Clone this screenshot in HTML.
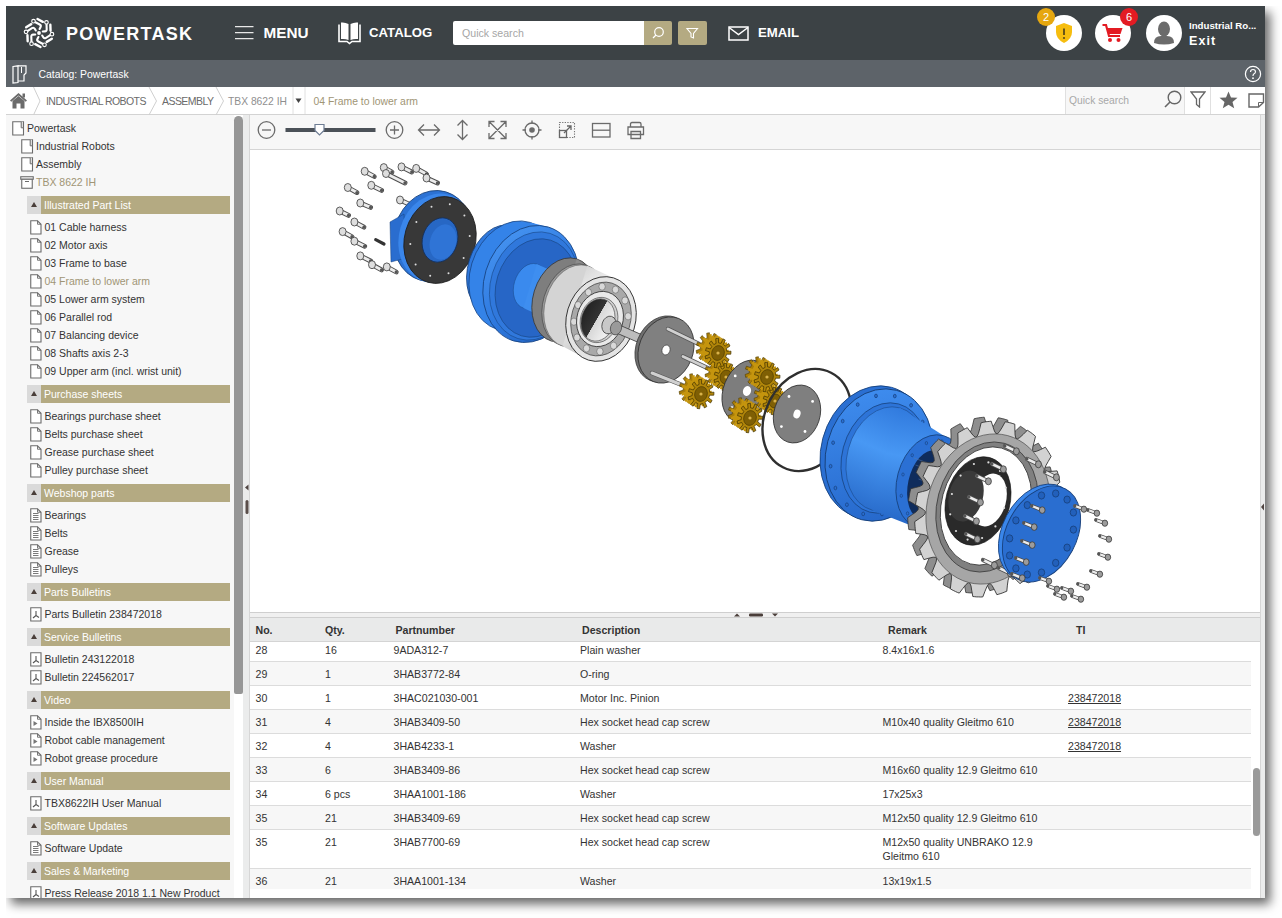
<!DOCTYPE html>
<html><head><meta charset="utf-8"><title>Powertask</title>
<style>
*{box-sizing:border-box}
html,body{margin:0;padding:0;background:#fff;width:1282px;height:918px;overflow:hidden;font-family:"Liberation Sans", sans-serif}
.abs{position:absolute}
#shadow{position:absolute;left:6px;top:6px;width:1259px;height:892px;box-shadow:5px 6px 10px rgba(0,0,0,0.6);background:#fff;clip-path:inset(0px -40px -40px 0px)}
#hdr{position:absolute;left:6px;top:6px;width:1259px;height:54px;background:#3c4245}
#cat{position:absolute;left:6px;top:60px;width:1259px;height:27px;background:#5d6369}
#bc{position:absolute;left:6px;top:87px;width:1259px;height:28px;background:#fff;border-bottom:1px solid #d3d3d3}
#side{position:absolute;left:6px;top:115px;width:228px;height:783px;background:#f7f7f7;overflow:hidden}
.ic{position:absolute}
.ti{position:absolute;font-size:10.5px;line-height:14px;white-space:nowrap}
.sh{position:absolute;left:27px;width:203px;height:18px;background:#b4aa82}
.sh .tri{position:absolute;left:0;top:0;width:14px;height:18px;background:#dadada}
.sh .tri:after{content:"";position:absolute;left:3.5px;top:6px;border-left:3.5px solid transparent;border-right:3.5px solid transparent;border-bottom:5px solid #4a3f3a}
.sh .shl{position:absolute;left:17px;top:2px;font-size:10.5px;line-height:14px;color:#fff;white-space:nowrap}
#thumb{position:absolute;left:234px;top:116px;width:9px;height:578px;background:#969696;border-radius:4.5px 4.5px 2px 2px}
#split{position:absolute;left:243px;top:115px;width:7px;height:783px;background:#ebecec;border-right:1px solid #d6d6d6}
#tb{position:absolute;left:250px;top:115px;width:1010px;height:35px;background:#f7f7f7;border-bottom:1px solid #d5d5d5}
#view{position:absolute;left:250px;top:150px;width:1010px;height:462px;background:#fff}
#rstrip{position:absolute;left:1260px;top:115px;width:5px;height:783px;background:#ebecec;border-left:1px solid #d6d6d6}
#splitter{position:absolute;left:250px;top:612px;width:1010px;height:6px;background:#f0f0f0;border-top:1px solid #cfcfcf;border-bottom:1px solid #cfcfcf}
#th{position:absolute;left:250px;top:618px;width:1010px;height:24px;background:#e9eaea;border-bottom:1px solid #d4d4d4}
.thc{position:absolute;top:5px;font-size:10.6px;font-weight:bold;color:#333;line-height:14px}
#tbody{position:absolute;left:250px;top:642px;width:1010px;height:256px;overflow:hidden;background:#fff}
.tr{position:absolute;left:0;width:1001px;border-bottom:1px solid #dcdcdc}
.td{position:absolute;top:4.5px;font-size:10.6px;line-height:14.6px;color:#333;white-space:nowrap}
.tr{}
#tthumb{position:absolute;left:1253px;top:768px;width:7px;height:68px;background:#9a9a9a;border-radius:3.5px}
.w{color:#fff}
</style></head><body>
<div id="shadow"></div>
<div id="hdr"></div>
<div id="cat"></div>
<div id="bc"></div>
<div id="side"></div>
<div id="split"></div>
<div id="thumb"></div>
<div id="tb"></div>
<div id="view"></div>
<div id="rstrip"></div>
<div id="splitter"></div>
<div id="th"></div>
<div id="tbody"></div>

<!-- HEADER CONTENT -->
<svg class="abs" style="left:22px;top:16px" width="34" height="34" viewBox="0 0 34 34"><g fill="none" stroke="#fff" stroke-width="2.1" stroke-linecap="round"><path d="M12.92 5.97L17.69 8.50Q19.45 9.44 18.51 11.21L17.57 12.98"/><path d="M15.50 3.04L20.80 5.85" stroke-width="2.4"/><circle cx="11.51" cy="5.22" r="1.8" stroke-width="1.15" fill="#3c4245"/><path d="M24.51 7.95L24.70 13.35Q24.77 15.35 22.77 15.42L20.77 15.49"/><path d="M28.34 8.72L28.55 14.71" stroke-width="2.4"/><circle cx="24.46" cy="6.35" r="1.8" stroke-width="1.15" fill="#3c4245"/><path d="M28.59 18.98L24.01 21.84Q22.32 22.90 21.26 21.21L20.20 19.51"/><path d="M29.84 22.68L24.76 25.86" stroke-width="2.4"/><circle cx="29.95" cy="18.13" r="1.8" stroke-width="1.15" fill="#3c4245"/><path d="M21.08 28.03L16.31 25.50Q14.55 24.56 15.49 22.79L16.43 21.02"/><path d="M18.50 30.96L13.20 28.15" stroke-width="2.4"/><circle cx="22.49" cy="28.78" r="1.8" stroke-width="1.15" fill="#3c4245"/><path d="M9.49 26.05L9.30 20.65Q9.23 18.65 11.23 18.58L13.23 18.51"/><path d="M5.66 25.28L5.45 19.29" stroke-width="2.4"/><circle cx="9.54" cy="27.65" r="1.8" stroke-width="1.15" fill="#3c4245"/><path d="M5.41 15.02L9.99 12.16Q11.68 11.10 12.74 12.79L13.80 14.49"/><path d="M4.16 11.32L9.24 8.14" stroke-width="2.4"/><circle cx="4.05" cy="15.87" r="1.8" stroke-width="1.15" fill="#3c4245"/></g><circle cx="17" cy="17" r="1.9" fill="#fff"/></svg>
<div class="abs w" style="left:66px;top:21.5px;font-size:18px;font-weight:bold;letter-spacing:1.3px;line-height:24px">POWERTASK</div>
<svg class="abs" style="left:235px;top:25px" width="19" height="15"><path d="M0 1.6H18.5M0 7.6H18.5M0 13.6H18.5" stroke="#e8e8e8" stroke-width="1.4"/></svg>
<div class="abs w" style="left:263.5px;top:23px;font-size:15.3px;font-weight:bold;line-height:19px">MENU</div>
<svg class="abs" style="left:337px;top:21px" width="25" height="24" viewBox="0 0 25 24"><path d="M2 3.5 V20.5 H10 L12.5 22.5 L15 20.5 H23 V3.5" fill="none" stroke="#fff" stroke-width="1.6"/><path d="M4 1.5 Q8 1 11.5 3 V19 Q8 17.5 4 18Z M21 1.5 Q17 1 13.5 3 V19 Q17 17.5 21 18Z" fill="#fff"/></svg>
<div class="abs w" style="left:369px;top:24px;font-size:13.2px;font-weight:bold;line-height:18px">CATALOG</div>
<div class="abs" style="left:453px;top:21px;width:191px;height:24px;background:#fff;border-radius:2px 0 0 2px"></div>
<div class="abs" style="left:462px;top:25.5px;font-size:10.6px;color:#a6a6a6;line-height:14px">Quick search</div>
<div class="abs" style="left:644px;top:21px;width:28px;height:24px;background:#b4aa82;border-radius:0 2px 2px 0"></div>
<svg class="abs" style="left:651px;top:26px" width="14" height="14"><circle cx="8" cy="6" r="4.3" fill="none" stroke="#fff" stroke-width="1.2"/><path d="M5 9 L2 12" stroke="#fff" stroke-width="1.3"/></svg>
<div class="abs" style="left:678px;top:21px;width:29px;height:24px;background:#b4aa82;border-radius:2px"></div>
<svg class="abs" style="left:686px;top:27px" width="13" height="13"><path d="M1 1.5 H11.5 L7.5 6.5 V11 L5 10 V6.5Z" fill="none" stroke="#fff" stroke-width="1.1"/></svg>
<svg class="abs" style="left:728px;top:26px" width="21" height="15"><rect x="1" y="1" width="19" height="13" fill="none" stroke="#fff" stroke-width="1.5"/><path d="M1 1.5 L10.5 8.5 L20 1.5" fill="none" stroke="#fff" stroke-width="1.5"/></svg>
<div class="abs w" style="left:758px;top:24px;font-size:13.2px;font-weight:bold;line-height:18px">EMAIL</div>

<div class="abs" style="left:1046px;top:15px;width:36px;height:36px;border-radius:50%;background:#fff"></div>
<svg class="abs" style="left:1054px;top:22px" width="20" height="22" viewBox="0 0 20 22"><path d="M10 1 L18 4 V10 Q18 17 10 21 Q2 17 2 10 V4Z" fill="#f6bd0f"/><path d="M10 6.5V13" stroke="#5a4a1a" stroke-width="1.8"/><circle cx="10" cy="16" r="1.1" fill="#5a4a1a"/></svg>
<div class="abs" style="left:1037px;top:8px;width:18px;height:18px;border-radius:50%;background:#e6a70f;color:#fff;font-size:11px;line-height:18px;text-align:center">2</div>
<div class="abs" style="left:1095px;top:15px;width:36px;height:36px;border-radius:50%;background:#fff"></div>
<svg class="abs" style="left:1102px;top:23px" width="22" height="20" viewBox="0 0 22 20"><path d="M0.5 2 H4 L7 13 H18" fill="none" stroke="#e31b23" stroke-width="2.2"/><path d="M5 5 H20.5 L18.5 11 H6.5Z" fill="#e31b23"/><circle cx="8" cy="17" r="2" fill="#e31b23"/><circle cx="16.5" cy="17" r="2" fill="#e31b23"/></svg>
<div class="abs" style="left:1120px;top:8px;width:18px;height:18px;border-radius:50%;background:#e31b23;color:#fff;font-size:11px;line-height:18px;text-align:center">6</div>
<div class="abs" style="left:1146px;top:15px;width:36px;height:36px;border-radius:50%;background:#fff;overflow:hidden"></div>
<svg class="abs" style="left:1146px;top:15px" width="36" height="36" viewBox="0 0 36 36"><ellipse cx="18" cy="14" rx="6" ry="7.5" fill="#6b6b6b"/><path d="M8 28 Q8 21 15 21 H21 Q28 21 28 28 Q18 31 8 28Z" fill="#6b6b6b"/></svg>
<div class="abs w" style="left:1189px;top:20px;font-size:9.7px;font-weight:bold;line-height:12px">Industrial Ro...</div>
<div class="abs w" style="left:1189px;top:34px;font-size:12.5px;font-weight:bold;letter-spacing:1.1px;line-height:14px">Exit</div>

<!-- CATALOG BAR -->
<svg class="abs" style="left:12px;top:65px" width="15" height="19" viewBox="0 0 15 19"><path d="M1 1.5 L6 0.8 V17.5 L1 18Z" fill="none" stroke="#fff" stroke-width="1.2"/><path d="M6 0.8 H14 V8 L12 10 V16 H6" fill="none" stroke="#fff" stroke-width="1.2"/><path d="M9.5 2 V8" stroke="#fff" stroke-width="1"/></svg>
<div class="abs w" style="left:38.5px;top:68px;font-size:10.4px;line-height:14px">Catalog: Powertask</div>
<svg class="abs" style="left:1244px;top:65px" width="18" height="18"><circle cx="9" cy="9" r="7.6" fill="none" stroke="#fff" stroke-width="1.2"/><path d="M6.5 7 Q6.5 4.5 9 4.5 Q11.5 4.5 11.5 6.8 Q11.5 8.2 9.8 9 Q9 9.5 9 11" fill="none" stroke="#fff" stroke-width="1.2"/><circle cx="9" cy="13.2" r="0.9" fill="#fff"/></svg>

<!-- BREADCRUMB -->
<svg class="abs" style="left:9px;top:92px" width="19" height="17" viewBox="0 0 19 17"><path d="M9.5 1 L1 8.5 L2.3 9.8 L9.5 3.6 L16.7 9.8 L18 8.5Z" fill="#6b6b6b"/><path d="M3.5 9 L9.5 4 L15.5 9 V16.5 H11.5 V11.5 H7.5 V16.5 H3.5Z" fill="#6b6b6b"/><rect x="13.5" y="1.5" width="2.5" height="4" fill="#6b6b6b"/></svg>
<svg class="abs" style="left:0;top:87px" width="320" height="28"><g fill="none" stroke="#cfcfcf" stroke-width="1"><path d="M33.5 0 L40 14 L33.5 28"/><path d="M149 0 L156.5 14 L149 28"/><path d="M216 0 L223.5 14 L216 28"/></g><path d="M293 0V27M305 0V27" stroke="#e0e0e0"/><path d="M295.5 98.5 L301.5 98.5 L298.5 103Z" transform="translate(0,-87)" fill="#444"/></svg>
<div class="abs" style="left:46px;top:95px;font-size:10.5px;letter-spacing:-0.55px;color:#6a6a6a;line-height:13px">INDUSTRIAL ROBOTS</div>
<div class="abs" style="left:162px;top:95px;font-size:10.5px;letter-spacing:-0.55px;color:#6a6a6a;line-height:13px">ASSEMBLY</div>
<div class="abs" style="left:228px;top:95px;font-size:10.3px;color:#8f8f8f;line-height:13px">TBX 8622 IH</div>
<div class="abs" style="left:313.5px;top:95px;font-size:10.4px;color:#a09575;line-height:13px">04 Frame to lower arm</div>
<div class="abs" style="left:1065px;top:87px;width:120px;height:27px;background:#f7f7f7;border-left:1px solid #e0e0e0;border-right:1px solid #e0e0e0"></div>
<div class="abs" style="left:1069px;top:93.5px;font-size:10.3px;color:#a8a8a8;line-height:13px">Quick search</div>
<svg class="abs" style="left:1163px;top:89px" width="20" height="20"><circle cx="11.5" cy="8.5" r="6.3" fill="none" stroke="#666" stroke-width="1.4"/><path d="M7 13 L2 18" stroke="#666" stroke-width="1.6"/></svg>
<div class="abs" style="left:1210px;top:87px;width:1px;height:27px;background:#e0e0e0"></div>
<svg class="abs" style="left:1190px;top:91px" width="16" height="17"><path d="M1 1 H15 L9.5 8 V16 L6.5 13.5 V8Z" fill="none" stroke="#666" stroke-width="1.3"/></svg>
<svg class="abs" style="left:1219px;top:91px" width="19" height="18" viewBox="0 0 19 18"><path d="M9.5 0.5 L12 6.5 L18.5 6.8 L13.5 10.9 L15.2 17.3 L9.5 13.7 L3.8 17.3 L5.5 10.9 L0.5 6.8 L7 6.5Z" fill="#666"/></svg>
<svg class="abs" style="left:1248px;top:93px" width="17" height="15"><path d="M1 1 H15.5 V9.5 L10.5 14 H1Z" fill="none" stroke="#666" stroke-width="1.4"/><path d="M15.5 9.5 H10.5 V14" fill="none" stroke="#666" stroke-width="1"/></svg>

<!-- SIDEBAR -->
<div class="abs" style="left:0;top:115px;width:234px;height:783px;overflow:hidden"><div style="position:absolute;left:0;top:-115px;width:234px;height:1000px">
<svg class="ic" style="left:12px;top:121px" width="13" height="15" viewBox="0 0 13 15"><path d="M0.75 0.75H11.5V14H0.75Z" fill="#fff" stroke="#6b6b6b" stroke-width="1.1"/><path d="M9.2 0.75V6.8H11.5V0.75" fill="#ddd" stroke="#6b6b6b" stroke-width="1"/></svg>
<div class="ti" style="left:27px;top:121px;color:#333">Powertask</div>
<svg class="ic" style="left:21px;top:139px" width="13" height="15" viewBox="0 0 13 15"><path d="M0.75 0.75H11.5V14H0.75Z" fill="#fff" stroke="#6b6b6b" stroke-width="1.1"/><path d="M9.2 0.75V6.8H11.5V0.75" fill="#ddd" stroke="#6b6b6b" stroke-width="1"/></svg>
<div class="ti" style="left:36px;top:139px;color:#333">Industrial Robots</div>
<svg class="ic" style="left:21px;top:157px" width="13" height="15" viewBox="0 0 13 15"><path d="M0.75 0.75H11.5V14H0.75Z" fill="#fff" stroke="#6b6b6b" stroke-width="1.1"/><path d="M9.2 0.75V6.8H11.5V0.75" fill="#ddd" stroke="#6b6b6b" stroke-width="1"/></svg>
<div class="ti" style="left:36px;top:157px;color:#333">Assembly</div>
<svg class="ic" style="left:19.5px;top:176px" width="14" height="13" viewBox="0 0 14 13"><rect x="0.75" y="0.75" width="12.5" height="2.5" fill="#fff" stroke="#6b6b6b" stroke-width="1.1"/><rect x="1.75" y="3.25" width="10.5" height="9" fill="#fff" stroke="#6b6b6b" stroke-width="1.1"/><path d="M5 5.5H9" stroke="#6b6b6b" stroke-width="1"/></svg>
<div class="ti" style="left:36px;top:175px;color:#a09575">TBX 8622 IH</div>
<div class="sh" style="top:196px"><div class="tri"></div><div class="shl">Illustrated Part List</div></div>
<svg class="ic" style="left:30px;top:220px" width="12" height="15" viewBox="0 0 12 15"><path d="M0.75 0.75H7.5L11 4.25V14H0.75Z" fill="#fff" stroke="#6b6b6b" stroke-width="1.1"/><path d="M7.5 0.75V4.25H11" fill="none" stroke="#6b6b6b" stroke-width="0.9"/></svg>
<div class="ti" style="left:44.5px;top:220px;color:#333">01 Cable harness</div>
<svg class="ic" style="left:30px;top:238px" width="12" height="15" viewBox="0 0 12 15"><path d="M0.75 0.75H7.5L11 4.25V14H0.75Z" fill="#fff" stroke="#6b6b6b" stroke-width="1.1"/><path d="M7.5 0.75V4.25H11" fill="none" stroke="#6b6b6b" stroke-width="0.9"/></svg>
<div class="ti" style="left:44.5px;top:238px;color:#333">02 Motor axis</div>
<svg class="ic" style="left:30px;top:256px" width="12" height="15" viewBox="0 0 12 15"><path d="M0.75 0.75H7.5L11 4.25V14H0.75Z" fill="#fff" stroke="#6b6b6b" stroke-width="1.1"/><path d="M7.5 0.75V4.25H11" fill="none" stroke="#6b6b6b" stroke-width="0.9"/></svg>
<div class="ti" style="left:44.5px;top:256px;color:#333">03 Frame to base</div>
<svg class="ic" style="left:30px;top:274px" width="12" height="15" viewBox="0 0 12 15"><path d="M0.75 0.75H7.5L11 4.25V14H0.75Z" fill="#fff" stroke="#6b6b6b" stroke-width="1.1"/><path d="M7.5 0.75V4.25H11" fill="none" stroke="#6b6b6b" stroke-width="0.9"/></svg>
<div class="ti" style="left:44.5px;top:274px;color:#a09575">04 Frame to lower arm</div>
<svg class="ic" style="left:30px;top:292px" width="12" height="15" viewBox="0 0 12 15"><path d="M0.75 0.75H7.5L11 4.25V14H0.75Z" fill="#fff" stroke="#6b6b6b" stroke-width="1.1"/><path d="M7.5 0.75V4.25H11" fill="none" stroke="#6b6b6b" stroke-width="0.9"/></svg>
<div class="ti" style="left:44.5px;top:292px;color:#333">05 Lower arm system</div>
<svg class="ic" style="left:30px;top:310px" width="12" height="15" viewBox="0 0 12 15"><path d="M0.75 0.75H7.5L11 4.25V14H0.75Z" fill="#fff" stroke="#6b6b6b" stroke-width="1.1"/><path d="M7.5 0.75V4.25H11" fill="none" stroke="#6b6b6b" stroke-width="0.9"/></svg>
<div class="ti" style="left:44.5px;top:310px;color:#333">06 Parallel rod</div>
<svg class="ic" style="left:30px;top:328px" width="12" height="15" viewBox="0 0 12 15"><path d="M0.75 0.75H7.5L11 4.25V14H0.75Z" fill="#fff" stroke="#6b6b6b" stroke-width="1.1"/><path d="M7.5 0.75V4.25H11" fill="none" stroke="#6b6b6b" stroke-width="0.9"/></svg>
<div class="ti" style="left:44.5px;top:328px;color:#333">07 Balancing device</div>
<svg class="ic" style="left:30px;top:346px" width="12" height="15" viewBox="0 0 12 15"><path d="M0.75 0.75H7.5L11 4.25V14H0.75Z" fill="#fff" stroke="#6b6b6b" stroke-width="1.1"/><path d="M7.5 0.75V4.25H11" fill="none" stroke="#6b6b6b" stroke-width="0.9"/></svg>
<div class="ti" style="left:44.5px;top:346px;color:#333">08 Shafts axis 2-3</div>
<svg class="ic" style="left:30px;top:364px" width="12" height="15" viewBox="0 0 12 15"><path d="M0.75 0.75H7.5L11 4.25V14H0.75Z" fill="#fff" stroke="#6b6b6b" stroke-width="1.1"/><path d="M7.5 0.75V4.25H11" fill="none" stroke="#6b6b6b" stroke-width="0.9"/></svg>
<div class="ti" style="left:44.5px;top:364px;color:#333">09 Upper arm (incl. wrist unit)</div>
<div class="sh" style="top:385px"><div class="tri"></div><div class="shl">Purchase sheets</div></div>
<svg class="ic" style="left:30px;top:409px" width="12" height="15" viewBox="0 0 12 15"><path d="M0.75 0.75H7.5L11 4.25V14H0.75Z" fill="#fff" stroke="#6b6b6b" stroke-width="1.1"/><path d="M7.5 0.75V4.25H11" fill="none" stroke="#6b6b6b" stroke-width="0.9"/></svg>
<div class="ti" style="left:44.5px;top:409px;color:#333">Bearings purchase sheet</div>
<svg class="ic" style="left:30px;top:427px" width="12" height="15" viewBox="0 0 12 15"><path d="M0.75 0.75H7.5L11 4.25V14H0.75Z" fill="#fff" stroke="#6b6b6b" stroke-width="1.1"/><path d="M7.5 0.75V4.25H11" fill="none" stroke="#6b6b6b" stroke-width="0.9"/></svg>
<div class="ti" style="left:44.5px;top:427px;color:#333">Belts purchase sheet</div>
<svg class="ic" style="left:30px;top:445px" width="12" height="15" viewBox="0 0 12 15"><path d="M0.75 0.75H7.5L11 4.25V14H0.75Z" fill="#fff" stroke="#6b6b6b" stroke-width="1.1"/><path d="M7.5 0.75V4.25H11" fill="none" stroke="#6b6b6b" stroke-width="0.9"/></svg>
<div class="ti" style="left:44.5px;top:445px;color:#333">Grease purchase sheet</div>
<svg class="ic" style="left:30px;top:463px" width="12" height="15" viewBox="0 0 12 15"><path d="M0.75 0.75H7.5L11 4.25V14H0.75Z" fill="#fff" stroke="#6b6b6b" stroke-width="1.1"/><path d="M7.5 0.75V4.25H11" fill="none" stroke="#6b6b6b" stroke-width="0.9"/></svg>
<div class="ti" style="left:44.5px;top:463px;color:#333">Pulley purchase sheet</div>
<div class="sh" style="top:484px"><div class="tri"></div><div class="shl">Webshop parts</div></div>
<svg class="ic" style="left:30px;top:508px" width="12" height="15" viewBox="0 0 12 15"><path d="M0.75 0.75H7.5L11 4.25V14H0.75Z" fill="#fff" stroke="#6b6b6b" stroke-width="1.1"/><path d="M7.5 0.75V4.25H11" fill="none" stroke="#6b6b6b" stroke-width="0.9"/><path d="M3 5.5H8.5M3 7.5H8.5M3 9.5H8.5M3 11.5H8.5" stroke="#7a7a7a" stroke-width="1"/></svg>
<div class="ti" style="left:44.5px;top:508px;color:#333">Bearings</div>
<svg class="ic" style="left:30px;top:526px" width="12" height="15" viewBox="0 0 12 15"><path d="M0.75 0.75H7.5L11 4.25V14H0.75Z" fill="#fff" stroke="#6b6b6b" stroke-width="1.1"/><path d="M7.5 0.75V4.25H11" fill="none" stroke="#6b6b6b" stroke-width="0.9"/><path d="M3 5.5H8.5M3 7.5H8.5M3 9.5H8.5M3 11.5H8.5" stroke="#7a7a7a" stroke-width="1"/></svg>
<div class="ti" style="left:44.5px;top:526px;color:#333">Belts</div>
<svg class="ic" style="left:30px;top:544px" width="12" height="15" viewBox="0 0 12 15"><path d="M0.75 0.75H7.5L11 4.25V14H0.75Z" fill="#fff" stroke="#6b6b6b" stroke-width="1.1"/><path d="M7.5 0.75V4.25H11" fill="none" stroke="#6b6b6b" stroke-width="0.9"/><path d="M3 5.5H8.5M3 7.5H8.5M3 9.5H8.5M3 11.5H8.5" stroke="#7a7a7a" stroke-width="1"/></svg>
<div class="ti" style="left:44.5px;top:544px;color:#333">Grease</div>
<svg class="ic" style="left:30px;top:562px" width="12" height="15" viewBox="0 0 12 15"><path d="M0.75 0.75H7.5L11 4.25V14H0.75Z" fill="#fff" stroke="#6b6b6b" stroke-width="1.1"/><path d="M7.5 0.75V4.25H11" fill="none" stroke="#6b6b6b" stroke-width="0.9"/><path d="M3 5.5H8.5M3 7.5H8.5M3 9.5H8.5M3 11.5H8.5" stroke="#7a7a7a" stroke-width="1"/></svg>
<div class="ti" style="left:44.5px;top:562px;color:#333">Pulleys</div>
<div class="sh" style="top:583px"><div class="tri"></div><div class="shl">Parts Bulletins</div></div>
<svg class="ic" style="left:30px;top:607px" width="12" height="15" viewBox="0 0 12 15"><path d="M0.75 0.75H11V14H0.75Z" fill="#fff" stroke="#6b6b6b" stroke-width="1.1"/><path d="M6 4V8.5M6 8.5L3 11M6 8.5L9 10.5" stroke="#555" stroke-width="1.1" fill="none"/></svg>
<div class="ti" style="left:44.5px;top:607px;color:#333">Parts Bulletin 238472018</div>
<div class="sh" style="top:628px"><div class="tri"></div><div class="shl">Service Bulletins</div></div>
<svg class="ic" style="left:30px;top:652px" width="12" height="15" viewBox="0 0 12 15"><path d="M0.75 0.75H11V14H0.75Z" fill="#fff" stroke="#6b6b6b" stroke-width="1.1"/><path d="M6 4V8.5M6 8.5L3 11M6 8.5L9 10.5" stroke="#555" stroke-width="1.1" fill="none"/></svg>
<div class="ti" style="left:44.5px;top:652px;color:#333">Bulletin 243122018</div>
<svg class="ic" style="left:30px;top:670px" width="12" height="15" viewBox="0 0 12 15"><path d="M0.75 0.75H11V14H0.75Z" fill="#fff" stroke="#6b6b6b" stroke-width="1.1"/><path d="M6 4V8.5M6 8.5L3 11M6 8.5L9 10.5" stroke="#555" stroke-width="1.1" fill="none"/></svg>
<div class="ti" style="left:44.5px;top:670px;color:#333">Bulletin 224562017</div>
<div class="sh" style="top:691px"><div class="tri"></div><div class="shl">Video</div></div>
<svg class="ic" style="left:30px;top:715px" width="12" height="15" viewBox="0 0 12 15"><path d="M0.75 0.75H7.5L11 4.25V14H0.75Z" fill="#fff" stroke="#6b6b6b" stroke-width="1.1"/><path d="M7.5 0.75V4.25H11" fill="none" stroke="#6b6b6b" stroke-width="0.9"/><path d="M3.5 6L7.5 8.5L3.5 11Z" fill="#777"/></svg>
<div class="ti" style="left:44.5px;top:715px;color:#333">Inside the IBX8500IH</div>
<svg class="ic" style="left:30px;top:733px" width="12" height="15" viewBox="0 0 12 15"><path d="M0.75 0.75H7.5L11 4.25V14H0.75Z" fill="#fff" stroke="#6b6b6b" stroke-width="1.1"/><path d="M7.5 0.75V4.25H11" fill="none" stroke="#6b6b6b" stroke-width="0.9"/><path d="M3.5 6L7.5 8.5L3.5 11Z" fill="#777"/></svg>
<div class="ti" style="left:44.5px;top:733px;color:#333">Robot cable management</div>
<svg class="ic" style="left:30px;top:751px" width="12" height="15" viewBox="0 0 12 15"><path d="M0.75 0.75H7.5L11 4.25V14H0.75Z" fill="#fff" stroke="#6b6b6b" stroke-width="1.1"/><path d="M7.5 0.75V4.25H11" fill="none" stroke="#6b6b6b" stroke-width="0.9"/><path d="M3.5 6L7.5 8.5L3.5 11Z" fill="#777"/></svg>
<div class="ti" style="left:44.5px;top:751px;color:#333">Robot grease procedure</div>
<div class="sh" style="top:772px"><div class="tri"></div><div class="shl">User Manual</div></div>
<svg class="ic" style="left:30px;top:796px" width="12" height="15" viewBox="0 0 12 15"><path d="M0.75 0.75H11V14H0.75Z" fill="#fff" stroke="#6b6b6b" stroke-width="1.1"/><path d="M6 4V8.5M6 8.5L3 11M6 8.5L9 10.5" stroke="#555" stroke-width="1.1" fill="none"/></svg>
<div class="ti" style="left:44.5px;top:796px;color:#333">TBX8622IH User Manual</div>
<div class="sh" style="top:817px"><div class="tri"></div><div class="shl">Software Updates</div></div>
<svg class="ic" style="left:30px;top:841px" width="12" height="15" viewBox="0 0 12 15"><path d="M0.75 0.75H7.5L11 4.25V14H0.75Z" fill="#fff" stroke="#6b6b6b" stroke-width="1.1"/><path d="M7.5 0.75V4.25H11" fill="none" stroke="#6b6b6b" stroke-width="0.9"/><path d="M3 5.5H8.5M3 7.5H8.5M3 9.5H8.5M3 11.5H8.5" stroke="#7a7a7a" stroke-width="1"/></svg>
<div class="ti" style="left:44.5px;top:841px;color:#333">Software Update</div>
<div class="sh" style="top:862px"><div class="tri"></div><div class="shl">Sales &amp; Marketing</div></div>
<svg class="ic" style="left:30px;top:886px" width="12" height="15" viewBox="0 0 12 15"><path d="M0.75 0.75H11V14H0.75Z" fill="#fff" stroke="#6b6b6b" stroke-width="1.1"/><path d="M6 4V8.5M6 8.5L3 11M6 8.5L9 10.5" stroke="#555" stroke-width="1.1" fill="none"/></svg>
<div class="ti" style="left:44.5px;top:886px;color:#333">Press Release 2018 1.1 New Product</div>
</div></div>
<svg class="abs" style="left:243px;top:484px" width="7" height="32"><path d="M5.5 0.5 L2 3.5 L5.5 6.5Z" fill="#4e4340"/><rect x="2.5" y="16" width="3" height="14" rx="1.5" fill="#5a4e4a"/></svg>

<!-- TOOLBAR -->
<svg class="abs" style="left:250px;top:115px" width="400" height="34">
 <g fill="none" stroke="#6b6b6b" stroke-width="1.3">
  <circle cx="16.5" cy="15" r="8.3"/><path d="M12 15H21"/>
  <circle cx="144.5" cy="15" r="8.3"/><path d="M140 15H149M144.5 10.5V19.5"/>
  <path d="M168.5 15H189.5M174 9.5L168.5 15L174 20.5M184 9.5L189.5 15L184 20.5"/>
  <path d="M212.5 5.5V24.5M207.5 10.5L212.5 5.5L217.5 10.5M207.5 19.5L212.5 24.5L217.5 19.5"/>
  <path d="M239 6.5L256 23.5M256 6.5L239 23.5M239 12V6.5H244.5M250.5 6.5H256V12M239 18V23.5H244.5M250.5 23.5H256V18"/>
  <circle cx="282" cy="15" r="7"/><path d="M282 5.5V9M282 21V24.5M272.5 15H276M288 15H291.5"/>
  <rect x="342.5" y="8.5" width="17.5" height="13.5"/><path d="M342.5 15.2H360"/>
  <path d="M380.5 12V9Q380.5 7.5 382 7.5H389.5Q391 7.5 391 9V12M378 12H393.5V19.5H378Z M381 16.5H390.5V23.5H381Z"/>
 </g>
 <circle cx="282" cy="15" r="2.8" fill="#6b6b6b"/>
 <g fill="none" stroke="#777" stroke-width="1.1" stroke-dasharray="1.3 1.3"><rect x="309.5" y="7.5" width="15" height="15"/></g>
 <g fill="none" stroke="#666" stroke-width="1.3"><rect x="309.5" y="15.5" width="7" height="7"/><path d="M314 18L321 11M317 11H321V15"/></g>
 <rect x="35.5" y="13" width="90" height="4" fill="#4b5158"/>
 <path d="M65 9.5 H74 V15.5 L69.5 20 L65 15.5Z" fill="#fff" stroke="#6e7d94" stroke-width="1.2"/>
</svg>

<!-- VIEWER -->
<svg class="abs" style="left:0;top:0" width="1282" height="918" viewBox="0 0 1282 918">
<clipPath id="vclip"><rect x="250" y="150" width="1010" height="462"/></clipPath>
<g clip-path="url(#vclip)">
<defs><linearGradient id="gBlue" x1="0" y1="0" x2="1" y2="1"><stop offset="0" stop-color="#4a98f4"/><stop offset="0.55" stop-color="#2f7ae0"/><stop offset="1" stop-color="#1f5fbd"/></linearGradient><linearGradient id="gBody" x1="0" y1="0" x2="0.3" y2="1"><stop offset="0" stop-color="#3a88ec"/><stop offset="0.45" stop-color="#4799f5"/><stop offset="1" stop-color="#2465c6"/></linearGradient><linearGradient id="gGray" x1="0" y1="0" x2="0.4" y2="1"><stop offset="0" stop-color="#c9c9c9"/><stop offset="0.5" stop-color="#f4f4f4"/><stop offset="1" stop-color="#bdbdbd"/></linearGradient><linearGradient id="gDisc" x1="0" y1="0" x2="1" y2="1"><stop offset="0" stop-color="#8c8c8c"/><stop offset="1" stop-color="#707070"/></linearGradient><linearGradient id="gHole" x1="0" y1="0" x2="1" y2="0.3"><stop offset="0" stop-color="#1e1e1e"/><stop offset="0.55" stop-color="#333"/><stop offset="0.56" stop-color="#d8d8d8"/><stop offset="1" stop-color="#f0f0f0"/></linearGradient></defs>
<line x1="364.7" y1="171.3" x2="374.3" y2="176.5" stroke="#4e4e4e" stroke-width="4.8" stroke-linecap="round"/><line x1="364.7" y1="171.3" x2="374.3" y2="176.5" stroke="#ececec" stroke-width="2.9" stroke-linecap="round"/><circle cx="374.3" cy="176.5" r="1.7" fill="#555"/><ellipse cx="364.7" cy="171.3" rx="3.5" ry="4.0" fill="#dedede" stroke="#3a3a3a" stroke-width="0.8"/>
<line x1="383.8" y1="167.6" x2="392.0" y2="172.0" stroke="#4e4e4e" stroke-width="4.8" stroke-linecap="round"/><line x1="383.8" y1="167.6" x2="392.0" y2="172.0" stroke="#ececec" stroke-width="2.9" stroke-linecap="round"/><circle cx="392.0" cy="172.0" r="1.7" fill="#555"/><ellipse cx="383.8" cy="167.6" rx="3.5" ry="4.0" fill="#dedede" stroke="#3a3a3a" stroke-width="0.8"/>
<line x1="401.5" y1="166.9" x2="411.8" y2="172.0" stroke="#4e4e4e" stroke-width="4.8" stroke-linecap="round"/><line x1="401.5" y1="166.9" x2="411.8" y2="172.0" stroke="#ececec" stroke-width="2.9" stroke-linecap="round"/><circle cx="411.8" cy="172.0" r="1.7" fill="#555"/><ellipse cx="401.5" cy="166.9" rx="3.5" ry="4.0" fill="#dedede" stroke="#3a3a3a" stroke-width="0.8"/>
<line x1="416.2" y1="168.4" x2="426.5" y2="174.0" stroke="#4e4e4e" stroke-width="4.8" stroke-linecap="round"/><line x1="416.2" y1="168.4" x2="426.5" y2="174.0" stroke="#ececec" stroke-width="2.9" stroke-linecap="round"/><circle cx="426.5" cy="174.0" r="1.7" fill="#555"/><ellipse cx="416.2" cy="168.4" rx="3.5" ry="4.0" fill="#dedede" stroke="#3a3a3a" stroke-width="0.8"/>
<line x1="386.0" y1="173.5" x2="405.0" y2="183.0" stroke="#4e4e4e" stroke-width="4.8" stroke-linecap="round"/><line x1="386.0" y1="173.5" x2="405.0" y2="183.0" stroke="#ececec" stroke-width="2.9" stroke-linecap="round"/><circle cx="405.0" cy="183.0" r="1.7" fill="#555"/><ellipse cx="386.0" cy="173.5" rx="3.5" ry="4.0" fill="#dedede" stroke="#3a3a3a" stroke-width="0.8"/>
<line x1="426.5" y1="178.0" x2="437.5" y2="183.0" stroke="#4e4e4e" stroke-width="4.8" stroke-linecap="round"/><line x1="426.5" y1="178.0" x2="437.5" y2="183.0" stroke="#ececec" stroke-width="2.9" stroke-linecap="round"/><circle cx="437.5" cy="183.0" r="1.7" fill="#555"/><ellipse cx="426.5" cy="178.0" rx="3.5" ry="4.0" fill="#dedede" stroke="#3a3a3a" stroke-width="0.8"/>
<line x1="347.8" y1="187.5" x2="357.0" y2="192.6" stroke="#4e4e4e" stroke-width="4.8" stroke-linecap="round"/><line x1="347.8" y1="187.5" x2="357.0" y2="192.6" stroke="#ececec" stroke-width="2.9" stroke-linecap="round"/><circle cx="357.0" cy="192.6" r="1.7" fill="#555"/><ellipse cx="347.8" cy="187.5" rx="3.5" ry="4.0" fill="#dedede" stroke="#3a3a3a" stroke-width="0.8"/>
<line x1="371.3" y1="185.3" x2="381.6" y2="190.4" stroke="#4e4e4e" stroke-width="4.8" stroke-linecap="round"/><line x1="371.3" y1="185.3" x2="381.6" y2="190.4" stroke="#ececec" stroke-width="2.9" stroke-linecap="round"/><circle cx="381.6" cy="190.4" r="1.7" fill="#555"/><ellipse cx="371.3" cy="185.3" rx="3.5" ry="4.0" fill="#dedede" stroke="#3a3a3a" stroke-width="0.8"/>
<line x1="360.3" y1="203.0" x2="370.6" y2="207.4" stroke="#4e4e4e" stroke-width="4.8" stroke-linecap="round"/><line x1="360.3" y1="203.0" x2="370.6" y2="207.4" stroke="#ececec" stroke-width="2.9" stroke-linecap="round"/><circle cx="370.6" cy="207.4" r="1.7" fill="#555"/><ellipse cx="360.3" cy="203.0" rx="3.5" ry="4.0" fill="#dedede" stroke="#3a3a3a" stroke-width="0.8"/>
<line x1="400.0" y1="200.0" x2="409.6" y2="204.4" stroke="#4e4e4e" stroke-width="4.8" stroke-linecap="round"/><line x1="400.0" y1="200.0" x2="409.6" y2="204.4" stroke="#ececec" stroke-width="2.9" stroke-linecap="round"/><circle cx="409.6" cy="204.4" r="1.7" fill="#555"/><ellipse cx="400.0" cy="200.0" rx="3.5" ry="4.0" fill="#dedede" stroke="#3a3a3a" stroke-width="0.8"/>
<line x1="339.7" y1="211.0" x2="348.5" y2="215.4" stroke="#4e4e4e" stroke-width="4.8" stroke-linecap="round"/><line x1="339.7" y1="211.0" x2="348.5" y2="215.4" stroke="#ececec" stroke-width="2.9" stroke-linecap="round"/><circle cx="348.5" cy="215.4" r="1.7" fill="#555"/><ellipse cx="339.7" cy="211.0" rx="3.5" ry="4.0" fill="#dedede" stroke="#3a3a3a" stroke-width="0.8"/>
<line x1="354.4" y1="222.0" x2="364.0" y2="227.2" stroke="#4e4e4e" stroke-width="4.8" stroke-linecap="round"/><line x1="354.4" y1="222.0" x2="364.0" y2="227.2" stroke="#ececec" stroke-width="2.9" stroke-linecap="round"/><circle cx="364.0" cy="227.2" r="1.7" fill="#555"/><ellipse cx="354.4" cy="222.0" rx="3.5" ry="4.0" fill="#dedede" stroke="#3a3a3a" stroke-width="0.8"/>
<line x1="342.6" y1="231.6" x2="352.0" y2="236.8" stroke="#4e4e4e" stroke-width="4.8" stroke-linecap="round"/><line x1="342.6" y1="231.6" x2="352.0" y2="236.8" stroke="#ececec" stroke-width="2.9" stroke-linecap="round"/><circle cx="352.0" cy="236.8" r="1.7" fill="#555"/><ellipse cx="342.6" cy="231.6" rx="3.5" ry="4.0" fill="#dedede" stroke="#3a3a3a" stroke-width="0.8"/>
<line x1="354.4" y1="241.2" x2="364.7" y2="246.3" stroke="#4e4e4e" stroke-width="4.8" stroke-linecap="round"/><line x1="354.4" y1="241.2" x2="364.7" y2="246.3" stroke="#ececec" stroke-width="2.9" stroke-linecap="round"/><circle cx="364.7" cy="246.3" r="1.7" fill="#555"/><ellipse cx="354.4" cy="241.2" rx="3.5" ry="4.0" fill="#dedede" stroke="#3a3a3a" stroke-width="0.8"/>
<line x1="360.3" y1="255.9" x2="370.6" y2="261.0" stroke="#4e4e4e" stroke-width="4.8" stroke-linecap="round"/><line x1="360.3" y1="255.9" x2="370.6" y2="261.0" stroke="#ececec" stroke-width="2.9" stroke-linecap="round"/><circle cx="370.6" cy="261.0" r="1.7" fill="#555"/><ellipse cx="360.3" cy="255.9" rx="3.5" ry="4.0" fill="#dedede" stroke="#3a3a3a" stroke-width="0.8"/>
<line x1="372.0" y1="264.7" x2="381.6" y2="269.9" stroke="#4e4e4e" stroke-width="4.8" stroke-linecap="round"/><line x1="372.0" y1="264.7" x2="381.6" y2="269.9" stroke="#ececec" stroke-width="2.9" stroke-linecap="round"/><circle cx="381.6" cy="269.9" r="1.7" fill="#555"/><ellipse cx="372.0" cy="264.7" rx="3.5" ry="4.0" fill="#dedede" stroke="#3a3a3a" stroke-width="0.8"/>
<line x1="386.8" y1="266.9" x2="396.3" y2="272.0" stroke="#4e4e4e" stroke-width="4.8" stroke-linecap="round"/><line x1="386.8" y1="266.9" x2="396.3" y2="272.0" stroke="#ececec" stroke-width="2.9" stroke-linecap="round"/><circle cx="396.3" cy="272.0" r="1.7" fill="#555"/><ellipse cx="386.8" cy="266.9" rx="3.5" ry="4.0" fill="#dedede" stroke="#3a3a3a" stroke-width="0.8"/>
<line x1="375.7" y1="239.7" x2="384" y2="244" stroke="#333" stroke-width="3.2" stroke-linecap="round"/>
<ellipse cx="433.0" cy="236.0" rx="39.0" ry="46.0" transform="rotate(16 433.0 236.0)" fill="#2c72d4" stroke="#16407a" stroke-width="0.8" />
<path d="M390 222 L404 214 L406 258 L391 262Z" fill="#2a6dcf" stroke="#16407a" stroke-width="0.5"/>
<ellipse cx="436.0" cy="238.0" rx="37.0" ry="45.0" transform="rotate(16 436.0 238.0)" fill="#3a86ea" stroke="none" stroke-width="0" />
<ellipse cx="440.0" cy="240.0" rx="35.5" ry="44.0" transform="rotate(16 440.0 240.0)" fill="#383838" stroke="#1e1e1e" stroke-width="0.8" />
<ellipse cx="440.0" cy="240.0" rx="17.5" ry="22.5" transform="rotate(16 440.0 240.0)" fill="#2767c4" stroke="#132f5a" stroke-width="0.8" />
<ellipse cx="443.0" cy="242.0" rx="13.0" ry="18.0" transform="rotate(16 443.0 242.0)" fill="#2f74d6" stroke="none" stroke-width="0.8" />
<circle cx="463.6" cy="258.1" r="1" fill="#ddd"/>
<circle cx="448.5" cy="273.3" r="1" fill="#ddd"/>
<circle cx="430.2" cy="275.7" r="1" fill="#ddd"/>
<circle cx="415.6" cy="264.5" r="1" fill="#ddd"/>
<circle cx="410.3" cy="243.9" r="1" fill="#ddd"/>
<circle cx="416.4" cy="221.9" r="1" fill="#ddd"/>
<circle cx="431.5" cy="206.7" r="1" fill="#ddd"/>
<circle cx="449.8" cy="204.3" r="1" fill="#ddd"/>
<circle cx="464.4" cy="215.5" r="1" fill="#ddd"/>
<circle cx="469.7" cy="236.1" r="1" fill="#ddd"/>
<ellipse cx="499.0" cy="269.0" rx="31.0" ry="45.0" transform="rotate(17 499.0 269.0)" fill="#2f79de" stroke="#17427f" stroke-width="0.8" />
<path d="M512.2 226.0L530.1 223.4L497.9 328.6L485.8 312.0Z" fill="#3580e4" stroke="none" stroke-width="0.6"/>
<ellipse cx="514.0" cy="276.0" rx="44.0" ry="56.0" transform="rotate(17 514.0 276.0)" fill="#3483e8" stroke="#17427f" stroke-width="0.7" />
<path d="M530.4 222.4L548.4 227.1L513.6 340.9L497.6 329.6Z" fill="#3a88ec" stroke="none" stroke-width="0.6"/>
<ellipse cx="531.0" cy="284.0" rx="47.0" ry="59.5" transform="rotate(17 531.0 284.0)" fill="url(#gBlue)" stroke="#17427f" stroke-width="0.8" />
<ellipse cx="534.0" cy="286.0" rx="43.5" ry="55.0" transform="rotate(17 534.0 286.0)" fill="#3078dc" stroke="#1a4a8c" stroke-width="0.6" />
<ellipse cx="536.0" cy="288.0" rx="40.0" ry="50.0" transform="rotate(17 536.0 288.0)" fill="#2766c6" stroke="#1a4a8c" stroke-width="0.7" />
<ellipse cx="530.0" cy="286.0" rx="16.0" ry="23.0" transform="rotate(17 530.0 286.0)" fill="#3a8aee" stroke="#1a4a8c" stroke-width="0.5" />
<path d="M536.7 264.0L558.7 274.0L545.3 318.0L523.3 308.0Z" fill="#3e8ef0" stroke="none" stroke-width="0.6"/>
<ellipse cx="552.0" cy="296.0" rx="16.0" ry="23.0" transform="rotate(17 552.0 296.0)" fill="#3584e8" stroke="#1a4a8c" stroke-width="0.5" />
<ellipse cx="564.0" cy="300.0" rx="31.0" ry="43.0" transform="rotate(17 564.0 300.0)" fill="#7e7e7e" stroke="#3a3a3a" stroke-width="0.8" />
<path d="M576.6 258.9L585.3 264.8L560.7 345.2L551.4 341.1Z" fill="#8c8c8c" stroke="none" stroke-width="0.6"/>
<ellipse cx="573.0" cy="305.0" rx="30.0" ry="42.0" transform="rotate(17 573.0 305.0)" fill="#9a9a9a" stroke="#444" stroke-width="0.6" />
<ellipse cx="575.0" cy="306.0" rx="30.0" ry="42.0" transform="rotate(17 575.0 306.0)" fill="#d4d4d4" stroke="#555" stroke-width="0.5" />
<path d="M587.3 265.8L613.6 277.9L588.4 360.1L562.7 346.2Z" fill="url(#gGray)" stroke="none" stroke-width="0.6"/>
<ellipse cx="601.0" cy="319.0" rx="34.5" ry="43.0" transform="rotate(17 601.0 319.0)" fill="#e4e4e4" stroke="#333" stroke-width="0.9" />
<ellipse cx="601.0" cy="319.0" rx="29.5" ry="37.5" transform="rotate(17 601.0 319.0)" fill="#a9a9a9" stroke="#444" stroke-width="0.7" />
<ellipse cx="623.9" cy="332.9" rx="3.2" ry="3.6" fill="#d9d9d9" stroke="#555" stroke-width="0.5"/>
<ellipse cx="613.6" cy="345.7" rx="3.2" ry="3.6" fill="#d9d9d9" stroke="#555" stroke-width="0.5"/>
<ellipse cx="599.9" cy="351.4" rx="3.2" ry="3.6" fill="#d9d9d9" stroke="#555" stroke-width="0.5"/>
<ellipse cx="586.5" cy="348.4" rx="3.2" ry="3.6" fill="#d9d9d9" stroke="#555" stroke-width="0.5"/>
<ellipse cx="577.0" cy="337.5" rx="3.2" ry="3.6" fill="#d9d9d9" stroke="#555" stroke-width="0.5"/>
<ellipse cx="573.9" cy="321.7" rx="3.2" ry="3.6" fill="#d9d9d9" stroke="#555" stroke-width="0.5"/>
<ellipse cx="578.1" cy="305.1" rx="3.2" ry="3.6" fill="#d9d9d9" stroke="#555" stroke-width="0.5"/>
<ellipse cx="588.4" cy="292.3" rx="3.2" ry="3.6" fill="#d9d9d9" stroke="#555" stroke-width="0.5"/>
<ellipse cx="602.1" cy="286.6" rx="3.2" ry="3.6" fill="#d9d9d9" stroke="#555" stroke-width="0.5"/>
<ellipse cx="615.5" cy="289.6" rx="3.2" ry="3.6" fill="#d9d9d9" stroke="#555" stroke-width="0.5"/>
<ellipse cx="625.0" cy="300.5" rx="3.2" ry="3.6" fill="#d9d9d9" stroke="#555" stroke-width="0.5"/>
<ellipse cx="628.1" cy="316.3" rx="3.2" ry="3.6" fill="#d9d9d9" stroke="#555" stroke-width="0.5"/>
<ellipse cx="600.0" cy="319.0" rx="23.0" ry="28.0" transform="rotate(17 600.0 319.0)" fill="#e9e9e9" stroke="#333" stroke-width="0.8" />
<ellipse cx="599.0" cy="320.0" rx="18.5" ry="23.0" transform="rotate(17 599.0 320.0)" fill="#cfcfcf" stroke="#444" stroke-width="0.6" />
<ellipse cx="598.0" cy="320.0" rx="16.5" ry="21.5" transform="rotate(17 598.0 320.0)" fill="url(#gHole)" stroke="#444" stroke-width="0.6" />
<line x1="611" y1="326" x2="648" y2="342" stroke="#4a4a4a" stroke-width="9.5" stroke-linecap="round"/><line x1="611" y1="326" x2="648" y2="342" stroke="#bdbdbd" stroke-width="7.5" stroke-linecap="round"/>
<path d="M611.6 316.4L618.0 321.3L614.0 334.7L606.4 333.6Z" fill="#b8b8b8" stroke="none" stroke-width="0.6"/>
<ellipse cx="609.0" cy="325.0" rx="7.0" ry="9.0" transform="rotate(17 609.0 325.0)" fill="#c8c8c8" stroke="#444" stroke-width="0.8" />
<ellipse cx="616.0" cy="328.0" rx="5.5" ry="7.0" transform="rotate(17 616.0 328.0)" fill="#9a9a9a" stroke="#444" stroke-width="0.7" />
<ellipse cx="663.0" cy="349.0" rx="27.0" ry="34.0" transform="rotate(22 663.0 349.0)" fill="#6f6f6f" stroke="#333" stroke-width="0.7" />
<ellipse cx="666.0" cy="350.0" rx="27.0" ry="34.0" transform="rotate(22 666.0 350.0)" fill="#808080" stroke="#333" stroke-width="0.8" />
<ellipse cx="666.0" cy="350.0" rx="4.0" ry="5.0" transform="rotate(18 666.0 350.0)" fill="#fff" stroke="#333" stroke-width="0.6" />
<line x1="668" y1="329" x2="699" y2="344" stroke="#555" stroke-width="4.4" stroke-linecap="round"/><line x1="668" y1="329" x2="699" y2="344" stroke="#d0d0d0" stroke-width="3" stroke-linecap="round"/>
<line x1="683" y1="356.5" x2="716" y2="372" stroke="#555" stroke-width="4.4" stroke-linecap="round"/><line x1="683" y1="356.5" x2="716" y2="372" stroke="#d0d0d0" stroke-width="3" stroke-linecap="round"/>
<line x1="652" y1="373" x2="682" y2="385" stroke="#555" stroke-width="4.4" stroke-linecap="round"/><line x1="652" y1="373" x2="682" y2="385" stroke="#d0d0d0" stroke-width="3" stroke-linecap="round"/>
<path d="M724.2 375.2 L727.4 377.5 L725.9 379.9 L722.8 377.5 L720.9 379.3 L722.4 383.3 L720.1 384.5 L718.8 380.5 L716.4 380.9 L715.7 385.3 L713.2 385.0 L714.1 380.6 L712.1 379.5 L709.4 383.0 L707.6 381.2 L710.4 377.8 L709.3 375.6 L705.5 377.0 L705.0 374.3 L708.8 373.0 L709.0 370.4 L705.3 369.3 L706.2 366.5 L709.8 367.8 L711.2 365.5 L708.8 362.2 L710.8 360.3 L713.1 363.7 L715.2 362.5 L714.9 358.2 L717.4 357.7 L717.6 362.1 L719.9 362.4 L721.7 358.3 L723.8 359.4 L721.9 363.5 L723.6 365.2 L727.0 362.6 L728.2 365.0 L724.7 367.4 L725.2 370.0 L729.1 369.8 L728.9 372.6 L725.0 372.6Z" fill="#a97d08" stroke="#4e3b00" stroke-width="0.6"/><path d="M726.5 376.6 L729.6 378.9 L728.1 381.3 L725.1 378.9 L723.2 380.7 L724.6 384.6 L722.3 385.9 L721.0 381.8 L718.7 382.3 L717.9 386.7 L715.5 386.4 L716.4 382.0 L714.3 380.9 L711.6 384.4 L709.9 382.6 L712.7 379.2 L711.5 377.0 L707.8 378.4 L707.2 375.7 L711.0 374.4 L711.2 371.7 L707.5 370.7 L708.4 367.9 L712.0 369.2 L713.4 366.9 L711.0 363.6 L713.0 361.7 L715.3 365.1 L717.5 363.9 L717.1 359.5 L719.6 359.1 L719.8 363.5 L722.1 363.8 L723.9 359.7 L726.1 360.8 L724.2 364.9 L725.8 366.6 L729.2 364.0 L730.4 366.4 L727.0 368.8 L727.5 371.3 L731.3 371.2 L731.2 374.0 L727.3 374.0Z" fill="#c5950e"/><path d="M728.7 378.0 L731.9 380.2 L730.4 382.6 L727.3 380.3 L725.4 382.1 L726.9 386.0 L724.6 387.3 L723.3 383.2 L720.9 383.7 L720.2 388.1 L717.7 387.7 L718.6 383.3 L716.6 382.3 L713.9 385.7 L712.1 383.9 L714.9 380.6 L713.8 378.3 L710.0 379.8 L709.5 377.1 L713.3 375.8 L713.5 373.1 L709.8 372.0 L710.7 369.3 L714.3 370.5 L715.7 368.2 L713.3 365.0 L715.3 363.1 L717.6 366.4 L719.7 365.3 L719.4 360.9 L721.9 360.4 L722.1 364.8 L724.4 365.2 L726.2 361.1 L728.3 362.2 L726.4 366.2 L728.1 367.9 L731.5 365.4 L732.7 367.7 L729.2 370.2 L729.7 372.7 L733.6 372.5 L733.4 375.4 L729.5 375.4Z" fill="#c5950e"/><path d="M731.0 379.3 L734.1 381.6 L732.6 384.0 L729.6 381.6 L727.7 383.4 L729.1 387.4 L726.8 388.6 L725.5 384.6 L723.2 385.0 L722.4 389.5 L720.0 389.1 L720.9 384.7 L718.8 383.6 L716.1 387.1 L714.4 385.3 L717.2 381.9 L716.0 379.7 L712.3 381.1 L711.7 378.4 L715.5 377.2 L715.7 374.5 L712.0 373.4 L712.9 370.7 L716.5 371.9 L717.9 369.6 L715.5 366.4 L717.5 364.5 L719.8 367.8 L722.0 366.7 L721.6 362.3 L724.1 361.8 L724.3 366.2 L726.6 366.5 L728.4 362.4 L730.6 363.6 L728.7 367.6 L730.3 369.3 L733.7 366.8 L734.9 369.1 L731.5 371.5 L732.0 374.1 L735.8 373.9 L735.7 376.8 L731.8 376.8Z" fill="#c5950e"/><path d="M733.2 380.7 L736.4 383.0 L734.9 385.4 L731.8 383.0 L729.9 384.8 L731.4 388.8 L729.1 390.0 L727.8 386.0 L725.4 386.4 L724.7 390.8 L722.2 390.5 L723.1 386.1 L721.1 385.0 L718.4 388.5 L716.6 386.7 L719.4 383.3 L718.3 381.1 L714.5 382.5 L714.0 379.8 L717.8 378.5 L718.0 375.9 L714.3 374.8 L715.2 372.0 L718.8 373.3 L720.2 371.0 L717.8 367.7 L719.8 365.8 L722.1 369.2 L724.2 368.0 L723.9 363.7 L726.4 363.2 L726.6 367.6 L728.9 367.9 L730.7 363.8 L732.8 364.9 L730.9 369.0 L732.6 370.7 L736.0 368.1 L737.2 370.5 L733.7 372.9 L734.2 375.5 L738.1 375.3 L737.9 378.1 L734.0 378.1Z" fill="#b0850a" stroke="#3e2f00" stroke-width="0.7"/><ellipse cx="726" cy="377" rx="5.9" ry="7.0" transform="rotate(17 726 377)" fill="#7f5f04" stroke="#3e2f00" stroke-width="0.5"/><circle cx="726" cy="377" r="1.6" fill="#d9b24a"/>
<path d="M716.7 351.5 L720.1 353.9 L718.5 356.5 L715.2 353.9 L713.2 355.9 L714.8 360.1 L712.3 361.4 L710.9 357.1 L708.4 357.6 L707.6 362.3 L705.0 361.9 L705.9 357.2 L703.7 356.1 L700.8 359.8 L698.9 357.9 L701.9 354.3 L700.7 351.9 L696.7 353.4 L696.1 350.5 L700.2 349.1 L700.4 346.3 L696.5 345.1 L697.4 342.2 L701.3 343.5 L702.8 341.1 L700.2 337.6 L702.3 335.5 L704.8 339.1 L707.1 337.9 L706.7 333.2 L709.4 332.7 L709.6 337.4 L712.1 337.8 L714.0 333.4 L716.3 334.6 L714.3 338.9 L716.1 340.7 L719.7 338.0 L721.0 340.5 L717.3 343.1 L717.8 345.9 L722.0 345.7 L721.8 348.7 L717.6 348.7Z" fill="#a97d08" stroke="#4e3b00" stroke-width="0.6"/><path d="M719.0 352.9 L722.4 355.3 L720.8 357.9 L717.5 355.3 L715.5 357.2 L717.0 361.5 L714.5 362.8 L713.1 358.5 L710.6 358.9 L709.8 363.7 L707.2 363.3 L708.2 358.6 L706.0 357.5 L703.1 361.2 L701.2 359.2 L704.2 355.6 L703.0 353.3 L698.9 354.8 L698.4 351.9 L702.5 350.5 L702.6 347.7 L698.7 346.5 L699.6 343.6 L703.5 344.9 L705.0 342.4 L702.5 339.0 L704.6 336.9 L707.0 340.5 L709.4 339.3 L709.0 334.6 L711.6 334.1 L711.9 338.8 L714.3 339.1 L716.3 334.7 L718.6 335.9 L716.5 340.3 L718.3 342.1 L721.9 339.4 L723.2 341.9 L719.5 344.5 L720.0 347.2 L724.2 347.0 L724.0 350.1 L719.9 350.1Z" fill="#c5950e"/><path d="M721.2 354.2 L724.6 356.7 L723.0 359.2 L719.7 356.7 L717.7 358.6 L719.3 362.9 L716.8 364.2 L715.4 359.9 L712.9 360.3 L712.1 365.1 L709.5 364.7 L710.4 360.0 L708.2 358.8 L705.3 362.6 L703.4 360.6 L706.4 357.0 L705.2 354.6 L701.2 356.2 L700.6 353.3 L704.7 351.9 L704.9 349.0 L701.0 347.9 L701.9 344.9 L705.8 346.3 L707.3 343.8 L704.7 340.3 L706.8 338.3 L709.3 341.9 L711.6 340.6 L711.2 336.0 L713.9 335.5 L714.1 340.2 L716.6 340.5 L718.5 336.1 L720.8 337.3 L718.8 341.7 L720.6 343.5 L724.2 340.8 L725.5 343.3 L721.8 345.9 L722.3 348.6 L726.5 348.4 L726.3 351.5 L722.1 351.5Z" fill="#c5950e"/><path d="M723.5 355.6 L726.9 358.0 L725.3 360.6 L722.0 358.1 L720.0 360.0 L721.5 364.2 L719.0 365.6 L717.6 361.2 L715.1 361.7 L714.3 366.4 L711.7 366.1 L712.7 361.4 L710.5 360.2 L707.6 363.9 L705.7 362.0 L708.7 358.4 L707.5 356.0 L703.4 357.5 L702.9 354.6 L707.0 353.3 L707.1 350.4 L703.2 349.2 L704.1 346.3 L708.0 347.6 L709.5 345.2 L707.0 341.7 L709.1 339.7 L711.5 343.3 L713.9 342.0 L713.5 337.3 L716.1 336.8 L716.4 341.6 L718.8 341.9 L720.8 337.5 L723.1 338.7 L721.0 343.0 L722.8 344.9 L726.4 342.1 L727.7 344.7 L724.0 347.2 L724.5 350.0 L728.7 349.8 L728.5 352.8 L724.4 352.8Z" fill="#c5950e"/><path d="M725.7 357.0 L729.1 359.4 L727.5 362.0 L724.2 359.4 L722.2 361.4 L723.8 365.6 L721.3 366.9 L719.9 362.6 L717.4 363.1 L716.6 367.8 L714.0 367.4 L714.9 362.7 L712.7 361.6 L709.8 365.3 L707.9 363.4 L710.9 359.8 L709.7 357.4 L705.7 358.9 L705.1 356.0 L709.2 354.6 L709.4 351.8 L705.5 350.6 L706.4 347.7 L710.3 349.0 L711.8 346.6 L709.2 343.1 L711.3 341.0 L713.8 344.6 L716.1 343.4 L715.7 338.7 L718.4 338.2 L718.6 342.9 L721.1 343.3 L723.0 338.9 L725.3 340.1 L723.3 344.4 L725.1 346.2 L728.7 343.5 L730.0 346.0 L726.3 348.6 L726.8 351.4 L731.0 351.2 L730.8 354.2 L726.6 354.2Z" fill="#b0850a" stroke="#3e2f00" stroke-width="0.7"/><ellipse cx="718" cy="353" rx="6.3" ry="7.5" transform="rotate(17 718 353)" fill="#7f5f04" stroke="#3e2f00" stroke-width="0.5"/><circle cx="718" cy="353" r="1.6" fill="#d9b24a"/>
<path d="M699.7 392.5 L703.1 394.9 L701.5 397.5 L698.2 394.9 L696.2 396.9 L697.8 401.1 L695.3 402.4 L693.9 398.1 L691.4 398.6 L690.6 403.3 L688.0 402.9 L688.9 398.2 L686.7 397.1 L683.8 400.8 L681.9 398.9 L684.9 395.3 L683.7 392.9 L679.7 394.4 L679.1 391.5 L683.2 390.1 L683.4 387.3 L679.5 386.1 L680.4 383.2 L684.3 384.5 L685.8 382.1 L683.2 378.6 L685.3 376.5 L687.8 380.1 L690.1 378.9 L689.7 374.2 L692.4 373.7 L692.6 378.4 L695.1 378.8 L697.0 374.4 L699.3 375.6 L697.3 379.9 L699.1 381.7 L702.7 379.0 L704.0 381.5 L700.3 384.1 L700.8 386.9 L705.0 386.7 L704.8 389.7 L700.6 389.7Z" fill="#a97d08" stroke="#4e3b00" stroke-width="0.6"/><path d="M702.0 393.9 L705.4 396.3 L703.8 398.9 L700.5 396.3 L698.5 398.2 L700.0 402.5 L697.5 403.8 L696.1 399.5 L693.6 399.9 L692.8 404.7 L690.2 404.3 L691.2 399.6 L689.0 398.5 L686.1 402.2 L684.2 400.2 L687.2 396.6 L686.0 394.3 L681.9 395.8 L681.4 392.9 L685.5 391.5 L685.6 388.7 L681.7 387.5 L682.6 384.6 L686.5 385.9 L688.0 383.4 L685.5 380.0 L687.6 377.9 L690.0 381.5 L692.4 380.3 L692.0 375.6 L694.6 375.1 L694.9 379.8 L697.3 380.1 L699.3 375.7 L701.6 376.9 L699.5 381.3 L701.3 383.1 L704.9 380.4 L706.2 382.9 L702.5 385.5 L703.0 388.2 L707.2 388.0 L707.0 391.1 L702.9 391.1Z" fill="#c5950e"/><path d="M704.2 395.2 L707.6 397.7 L706.0 400.2 L702.7 397.7 L700.7 399.6 L702.3 403.9 L699.8 405.2 L698.4 400.9 L695.9 401.3 L695.1 406.1 L692.5 405.7 L693.4 401.0 L691.2 399.8 L688.3 403.6 L686.4 401.6 L689.4 398.0 L688.2 395.6 L684.2 397.2 L683.6 394.3 L687.7 392.9 L687.9 390.0 L684.0 388.9 L684.9 385.9 L688.8 387.3 L690.3 384.8 L687.7 381.3 L689.8 379.3 L692.3 382.9 L694.6 381.6 L694.2 377.0 L696.9 376.5 L697.1 381.2 L699.6 381.5 L701.5 377.1 L703.8 378.3 L701.8 382.7 L703.6 384.5 L707.2 381.8 L708.5 384.3 L704.8 386.9 L705.3 389.6 L709.5 389.4 L709.3 392.5 L705.1 392.5Z" fill="#c5950e"/><path d="M706.5 396.6 L709.9 399.0 L708.3 401.6 L705.0 399.1 L703.0 401.0 L704.5 405.2 L702.0 406.6 L700.6 402.2 L698.1 402.7 L697.3 407.4 L694.7 407.1 L695.7 402.4 L693.5 401.2 L690.6 404.9 L688.7 403.0 L691.7 399.4 L690.5 397.0 L686.4 398.5 L685.9 395.6 L690.0 394.3 L690.1 391.4 L686.2 390.2 L687.1 387.3 L691.0 388.6 L692.5 386.2 L690.0 382.7 L692.1 380.7 L694.5 384.3 L696.9 383.0 L696.5 378.3 L699.1 377.8 L699.4 382.6 L701.8 382.9 L703.8 378.5 L706.1 379.7 L704.0 384.0 L705.8 385.9 L709.4 383.1 L710.7 385.7 L707.0 388.2 L707.5 391.0 L711.7 390.8 L711.5 393.8 L707.4 393.8Z" fill="#c5950e"/><path d="M708.7 398.0 L712.1 400.4 L710.5 403.0 L707.2 400.4 L705.2 402.4 L706.8 406.6 L704.3 407.9 L702.9 403.6 L700.4 404.1 L699.6 408.8 L697.0 408.4 L697.9 403.7 L695.7 402.6 L692.8 406.3 L690.9 404.4 L693.9 400.8 L692.7 398.4 L688.7 399.9 L688.1 397.0 L692.2 395.6 L692.4 392.8 L688.5 391.6 L689.4 388.7 L693.3 390.0 L694.8 387.6 L692.2 384.1 L694.3 382.0 L696.8 385.6 L699.1 384.4 L698.7 379.7 L701.4 379.2 L701.6 383.9 L704.1 384.3 L706.0 379.9 L708.3 381.1 L706.3 385.4 L708.1 387.2 L711.7 384.5 L713.0 387.0 L709.3 389.6 L709.8 392.4 L714.0 392.2 L713.8 395.2 L709.6 395.2Z" fill="#b0850a" stroke="#3e2f00" stroke-width="0.7"/><ellipse cx="701" cy="394" rx="6.3" ry="7.5" transform="rotate(17 701 394)" fill="#7f5f04" stroke="#3e2f00" stroke-width="0.5"/><circle cx="701" cy="394" r="1.6" fill="#d9b24a"/>
<ellipse cx="746.0" cy="391.0" rx="22.5" ry="32.0" transform="rotate(22 746.0 391.0)" fill="#7d7d7d" stroke="#333" stroke-width="0.8" />
<ellipse cx="747.0" cy="391.0" rx="4.0" ry="5.0" transform="rotate(18 747.0 391.0)" fill="#fff" stroke="none" stroke-width="0.8" />
<circle cx="756.8" cy="406.1" r="1.4" fill="#fff"/>
<circle cx="732.0" cy="407.7" r="1.4" fill="#fff"/>
<circle cx="735.2" cy="375.9" r="1.4" fill="#fff"/>
<circle cx="760.0" cy="374.3" r="1.4" fill="#fff"/>
<path d="M773.2 399.2 L776.4 401.5 L774.9 403.9 L771.8 401.5 L769.9 403.3 L771.4 407.3 L769.1 408.5 L767.8 404.5 L765.4 404.9 L764.7 409.3 L762.2 409.0 L763.1 404.6 L761.1 403.5 L758.4 407.0 L756.6 405.2 L759.4 401.8 L758.3 399.6 L754.5 401.0 L754.0 398.3 L757.8 397.0 L758.0 394.4 L754.3 393.3 L755.2 390.5 L758.8 391.8 L760.2 389.5 L757.8 386.2 L759.8 384.3 L762.1 387.7 L764.2 386.5 L763.9 382.2 L766.4 381.7 L766.6 386.1 L768.9 386.4 L770.7 382.3 L772.8 383.4 L770.9 387.5 L772.6 389.2 L776.0 386.6 L777.2 389.0 L773.7 391.4 L774.2 394.0 L778.1 393.8 L777.9 396.6 L774.0 396.6Z" fill="#a97d08" stroke="#4e3b00" stroke-width="0.6"/><path d="M775.5 400.6 L778.6 402.9 L777.1 405.3 L774.1 402.9 L772.2 404.7 L773.6 408.6 L771.3 409.9 L770.0 405.8 L767.7 406.3 L766.9 410.7 L764.5 410.4 L765.4 406.0 L763.3 404.9 L760.6 408.4 L758.9 406.6 L761.7 403.2 L760.5 401.0 L756.8 402.4 L756.2 399.7 L760.0 398.4 L760.2 395.7 L756.5 394.7 L757.4 391.9 L761.0 393.2 L762.4 390.9 L760.0 387.6 L762.0 385.7 L764.3 389.1 L766.5 387.9 L766.1 383.5 L768.6 383.1 L768.8 387.5 L771.1 387.8 L772.9 383.7 L775.1 384.8 L773.2 388.9 L774.8 390.6 L778.2 388.0 L779.4 390.4 L776.0 392.8 L776.5 395.3 L780.3 395.2 L780.2 398.0 L776.3 398.0Z" fill="#c5950e"/><path d="M777.7 402.0 L780.9 404.2 L779.4 406.6 L776.3 404.3 L774.4 406.1 L775.9 410.0 L773.6 411.3 L772.3 407.2 L769.9 407.7 L769.2 412.1 L766.7 411.7 L767.6 407.3 L765.6 406.3 L762.9 409.7 L761.1 407.9 L763.9 404.6 L762.8 402.3 L759.0 403.8 L758.5 401.1 L762.3 399.8 L762.5 397.1 L758.8 396.0 L759.7 393.3 L763.3 394.5 L764.7 392.2 L762.3 389.0 L764.3 387.1 L766.6 390.4 L768.7 389.3 L768.4 384.9 L770.9 384.4 L771.1 388.8 L773.4 389.2 L775.2 385.1 L777.3 386.2 L775.4 390.2 L777.1 391.9 L780.5 389.4 L781.7 391.7 L778.2 394.2 L778.7 396.7 L782.6 396.5 L782.4 399.4 L778.5 399.4Z" fill="#c5950e"/><path d="M780.0 403.3 L783.1 405.6 L781.6 408.0 L778.6 405.6 L776.7 407.4 L778.1 411.4 L775.8 412.6 L774.5 408.6 L772.2 409.0 L771.4 413.5 L769.0 413.1 L769.9 408.7 L767.8 407.6 L765.1 411.1 L763.4 409.3 L766.2 405.9 L765.0 403.7 L761.3 405.1 L760.7 402.4 L764.5 401.2 L764.7 398.5 L761.0 397.4 L761.9 394.7 L765.5 395.9 L766.9 393.6 L764.5 390.4 L766.5 388.5 L768.8 391.8 L771.0 390.7 L770.6 386.3 L773.1 385.8 L773.3 390.2 L775.6 390.5 L777.4 386.4 L779.6 387.6 L777.7 391.6 L779.3 393.3 L782.7 390.8 L783.9 393.1 L780.5 395.5 L781.0 398.1 L784.8 397.9 L784.7 400.8 L780.8 400.8Z" fill="#c5950e"/><path d="M782.2 404.7 L785.4 407.0 L783.9 409.4 L780.8 407.0 L778.9 408.8 L780.4 412.8 L778.1 414.0 L776.8 410.0 L774.4 410.4 L773.7 414.8 L771.2 414.5 L772.1 410.1 L770.1 409.0 L767.4 412.5 L765.6 410.7 L768.4 407.3 L767.3 405.1 L763.5 406.5 L763.0 403.8 L766.8 402.5 L767.0 399.9 L763.3 398.8 L764.2 396.0 L767.8 397.3 L769.2 395.0 L766.8 391.7 L768.8 389.8 L771.1 393.2 L773.2 392.0 L772.9 387.7 L775.4 387.2 L775.6 391.6 L777.9 391.9 L779.7 387.8 L781.8 388.9 L779.9 393.0 L781.6 394.7 L785.0 392.1 L786.2 394.5 L782.7 396.9 L783.2 399.5 L787.1 399.3 L786.9 402.1 L783.0 402.1Z" fill="#b0850a" stroke="#3e2f00" stroke-width="0.7"/><ellipse cx="775" cy="401" rx="5.9" ry="7.0" transform="rotate(17 775 401)" fill="#7f5f04" stroke="#3e2f00" stroke-width="0.5"/><circle cx="775" cy="401" r="1.6" fill="#d9b24a"/>
<path d="M765.7 375.5 L769.1 377.9 L767.5 380.5 L764.2 377.9 L762.2 379.9 L763.8 384.1 L761.3 385.4 L759.9 381.1 L757.4 381.6 L756.6 386.3 L754.0 385.9 L754.9 381.2 L752.7 380.1 L749.8 383.8 L747.9 381.9 L750.9 378.3 L749.7 375.9 L745.7 377.4 L745.1 374.5 L749.2 373.1 L749.4 370.3 L745.5 369.1 L746.4 366.2 L750.3 367.5 L751.8 365.1 L749.2 361.6 L751.3 359.5 L753.8 363.1 L756.1 361.9 L755.7 357.2 L758.4 356.7 L758.6 361.4 L761.1 361.8 L763.0 357.4 L765.3 358.6 L763.3 362.9 L765.1 364.7 L768.7 362.0 L770.0 364.5 L766.3 367.1 L766.8 369.9 L771.0 369.7 L770.8 372.7 L766.6 372.7Z" fill="#a97d08" stroke="#4e3b00" stroke-width="0.6"/><path d="M768.0 376.9 L771.4 379.3 L769.8 381.9 L766.5 379.3 L764.5 381.2 L766.0 385.5 L763.5 386.8 L762.1 382.5 L759.6 382.9 L758.8 387.7 L756.2 387.3 L757.2 382.6 L755.0 381.5 L752.1 385.2 L750.2 383.2 L753.2 379.6 L752.0 377.3 L747.9 378.8 L747.4 375.9 L751.5 374.5 L751.6 371.7 L747.7 370.5 L748.6 367.6 L752.5 368.9 L754.0 366.4 L751.5 363.0 L753.6 360.9 L756.0 364.5 L758.4 363.3 L758.0 358.6 L760.6 358.1 L760.9 362.8 L763.3 363.1 L765.3 358.7 L767.6 359.9 L765.5 364.3 L767.3 366.1 L770.9 363.4 L772.2 365.9 L768.5 368.5 L769.0 371.2 L773.2 371.0 L773.0 374.1 L768.9 374.1Z" fill="#c5950e"/><path d="M770.2 378.2 L773.6 380.7 L772.0 383.2 L768.7 380.7 L766.7 382.6 L768.3 386.9 L765.8 388.2 L764.4 383.9 L761.9 384.3 L761.1 389.1 L758.5 388.7 L759.4 384.0 L757.2 382.8 L754.3 386.6 L752.4 384.6 L755.4 381.0 L754.2 378.6 L750.2 380.2 L749.6 377.3 L753.7 375.9 L753.9 373.0 L750.0 371.9 L750.9 368.9 L754.8 370.3 L756.3 367.8 L753.7 364.3 L755.8 362.3 L758.3 365.9 L760.6 364.6 L760.2 360.0 L762.9 359.5 L763.1 364.2 L765.6 364.5 L767.5 360.1 L769.8 361.3 L767.8 365.7 L769.6 367.5 L773.2 364.8 L774.5 367.3 L770.8 369.9 L771.3 372.6 L775.5 372.4 L775.3 375.5 L771.1 375.5Z" fill="#c5950e"/><path d="M772.5 379.6 L775.9 382.0 L774.3 384.6 L771.0 382.1 L769.0 384.0 L770.5 388.2 L768.0 389.6 L766.6 385.2 L764.1 385.7 L763.3 390.4 L760.7 390.1 L761.7 385.4 L759.5 384.2 L756.6 387.9 L754.7 386.0 L757.7 382.4 L756.5 380.0 L752.4 381.5 L751.9 378.6 L756.0 377.3 L756.1 374.4 L752.2 373.2 L753.1 370.3 L757.0 371.6 L758.5 369.2 L756.0 365.7 L758.1 363.7 L760.5 367.3 L762.9 366.0 L762.5 361.3 L765.1 360.8 L765.4 365.6 L767.8 365.9 L769.8 361.5 L772.1 362.7 L770.0 367.0 L771.8 368.9 L775.4 366.1 L776.7 368.7 L773.0 371.2 L773.5 374.0 L777.7 373.8 L777.5 376.8 L773.4 376.8Z" fill="#c5950e"/><path d="M774.7 381.0 L778.1 383.4 L776.5 386.0 L773.2 383.4 L771.2 385.4 L772.8 389.6 L770.3 390.9 L768.9 386.6 L766.4 387.1 L765.6 391.8 L763.0 391.4 L763.9 386.7 L761.7 385.6 L758.8 389.3 L756.9 387.4 L759.9 383.8 L758.7 381.4 L754.7 382.9 L754.1 380.0 L758.2 378.6 L758.4 375.8 L754.5 374.6 L755.4 371.7 L759.3 373.0 L760.8 370.6 L758.2 367.1 L760.3 365.0 L762.8 368.6 L765.1 367.4 L764.7 362.7 L767.4 362.2 L767.6 366.9 L770.1 367.3 L772.0 362.9 L774.3 364.1 L772.3 368.4 L774.1 370.2 L777.7 367.5 L779.0 370.0 L775.3 372.6 L775.8 375.4 L780.0 375.2 L779.8 378.2 L775.6 378.2Z" fill="#b0850a" stroke="#3e2f00" stroke-width="0.7"/><ellipse cx="767" cy="377" rx="6.3" ry="7.5" transform="rotate(17 767 377)" fill="#7f5f04" stroke="#3e2f00" stroke-width="0.5"/><circle cx="767" cy="377" r="1.6" fill="#d9b24a"/>
<path d="M748.7 416.5 L752.1 418.9 L750.5 421.5 L747.2 418.9 L745.2 420.9 L746.8 425.1 L744.3 426.4 L742.9 422.1 L740.4 422.6 L739.6 427.3 L737.0 426.9 L737.9 422.2 L735.7 421.1 L732.8 424.8 L730.9 422.9 L733.9 419.3 L732.7 416.9 L728.7 418.4 L728.1 415.5 L732.2 414.1 L732.4 411.3 L728.5 410.1 L729.4 407.2 L733.3 408.5 L734.8 406.1 L732.2 402.6 L734.3 400.5 L736.8 404.1 L739.1 402.9 L738.7 398.2 L741.4 397.7 L741.6 402.4 L744.1 402.8 L746.0 398.4 L748.3 399.6 L746.3 403.9 L748.1 405.7 L751.7 403.0 L753.0 405.5 L749.3 408.1 L749.8 410.9 L754.0 410.7 L753.8 413.7 L749.6 413.7Z" fill="#a97d08" stroke="#4e3b00" stroke-width="0.6"/><path d="M751.0 417.9 L754.4 420.3 L752.8 422.9 L749.5 420.3 L747.5 422.2 L749.0 426.5 L746.5 427.8 L745.1 423.5 L742.6 423.9 L741.8 428.7 L739.2 428.3 L740.2 423.6 L738.0 422.5 L735.1 426.2 L733.2 424.2 L736.2 420.6 L735.0 418.3 L730.9 419.8 L730.4 416.9 L734.5 415.5 L734.6 412.7 L730.7 411.5 L731.6 408.6 L735.5 409.9 L737.0 407.4 L734.5 404.0 L736.6 401.9 L739.0 405.5 L741.4 404.3 L741.0 399.6 L743.6 399.1 L743.9 403.8 L746.3 404.1 L748.3 399.7 L750.6 400.9 L748.5 405.3 L750.3 407.1 L753.9 404.4 L755.2 406.9 L751.5 409.5 L752.0 412.2 L756.2 412.0 L756.0 415.1 L751.9 415.1Z" fill="#c5950e"/><path d="M753.2 419.2 L756.6 421.7 L755.0 424.2 L751.7 421.7 L749.7 423.6 L751.3 427.9 L748.8 429.2 L747.4 424.9 L744.9 425.3 L744.1 430.1 L741.5 429.7 L742.4 425.0 L740.2 423.8 L737.3 427.6 L735.4 425.6 L738.4 422.0 L737.2 419.6 L733.2 421.2 L732.6 418.3 L736.7 416.9 L736.9 414.0 L733.0 412.9 L733.9 409.9 L737.8 411.3 L739.3 408.8 L736.7 405.3 L738.8 403.3 L741.3 406.9 L743.6 405.6 L743.2 401.0 L745.9 400.5 L746.1 405.2 L748.6 405.5 L750.5 401.1 L752.8 402.3 L750.8 406.7 L752.6 408.5 L756.2 405.8 L757.5 408.3 L753.8 410.9 L754.3 413.6 L758.5 413.4 L758.3 416.5 L754.1 416.5Z" fill="#c5950e"/><path d="M755.5 420.6 L758.9 423.0 L757.3 425.6 L754.0 423.1 L752.0 425.0 L753.5 429.2 L751.0 430.6 L749.6 426.2 L747.1 426.7 L746.3 431.4 L743.7 431.1 L744.7 426.4 L742.5 425.2 L739.6 428.9 L737.7 427.0 L740.7 423.4 L739.5 421.0 L735.4 422.5 L734.9 419.6 L739.0 418.3 L739.1 415.4 L735.2 414.2 L736.1 411.3 L740.0 412.6 L741.5 410.2 L739.0 406.7 L741.1 404.7 L743.5 408.3 L745.9 407.0 L745.5 402.3 L748.1 401.8 L748.4 406.6 L750.8 406.9 L752.8 402.5 L755.1 403.7 L753.0 408.0 L754.8 409.9 L758.4 407.1 L759.7 409.7 L756.0 412.2 L756.5 415.0 L760.7 414.8 L760.5 417.8 L756.4 417.8Z" fill="#c5950e"/><path d="M757.7 422.0 L761.1 424.4 L759.5 427.0 L756.2 424.4 L754.2 426.4 L755.8 430.6 L753.3 431.9 L751.9 427.6 L749.4 428.1 L748.6 432.8 L746.0 432.4 L746.9 427.7 L744.7 426.6 L741.8 430.3 L739.9 428.4 L742.9 424.8 L741.7 422.4 L737.7 423.9 L737.1 421.0 L741.2 419.6 L741.4 416.8 L737.5 415.6 L738.4 412.7 L742.3 414.0 L743.8 411.6 L741.2 408.1 L743.3 406.0 L745.8 409.6 L748.1 408.4 L747.7 403.7 L750.4 403.2 L750.6 407.9 L753.1 408.3 L755.0 403.9 L757.3 405.1 L755.3 409.4 L757.1 411.2 L760.7 408.5 L762.0 411.0 L758.3 413.6 L758.8 416.4 L763.0 416.2 L762.8 419.2 L758.6 419.2Z" fill="#b0850a" stroke="#3e2f00" stroke-width="0.7"/><ellipse cx="750" cy="418" rx="6.3" ry="7.5" transform="rotate(17 750 418)" fill="#7f5f04" stroke="#3e2f00" stroke-width="0.5"/><circle cx="750" cy="418" r="1.6" fill="#d9b24a"/>
<ellipse cx="807.0" cy="420.0" rx="42.0" ry="53.0" transform="rotate(27 807.0 420.0)" fill="none" stroke="#2f2f2f" stroke-width="2.4" />
<ellipse cx="797.0" cy="414.0" rx="23.0" ry="29.5" transform="rotate(18 797.0 414.0)" fill="#7f7f7f" stroke="#333" stroke-width="0.8" />
<ellipse cx="797.0" cy="414.0" rx="3.5" ry="4.5" transform="rotate(18 797.0 414.0)" fill="#fff" stroke="none" stroke-width="0.8" />
<circle cx="805.0" cy="431.5" r="1.4" fill="#fff"/>
<circle cx="781.4" cy="426.6" r="1.4" fill="#fff"/>
<circle cx="789.0" cy="396.5" r="1.4" fill="#fff"/>
<circle cx="812.6" cy="401.4" r="1.4" fill="#fff"/>
<defs><linearGradient id="gBodyU" gradientUnits="userSpaceOnUse" x1="905" y1="405" x2="885" y2="530"><stop offset="0" stop-color="#2f78dc"/><stop offset="0.4" stop-color="#4898f4"/><stop offset="1" stop-color="#2262c2"/></linearGradient><linearGradient id="gFlU" gradientUnits="userSpaceOnUse" x1="840" y1="400" x2="900" y2="520"><stop offset="0" stop-color="#3e8cee"/><stop offset="1" stop-color="#2668cb"/></linearGradient></defs>
<ellipse cx="874.0" cy="452.0" rx="53.0" ry="67.0" transform="rotate(15 874.0 452.0)" fill="#2a6fd2" stroke="#16407a" stroke-width="0.8" />
<path d="M891.3 387.3L896.3 390.3L861.7 519.7L856.7 516.7Z" fill="#2a6fd2" stroke="none" stroke-width="0.6"/>
<ellipse cx="879.0" cy="455.0" rx="53.0" ry="67.0" transform="rotate(15 879.0 455.0)" fill="url(#gFlU)" stroke="#16407a" stroke-width="0.9" />
<ellipse cx="924.9" cy="467.3" rx="1.4" ry="1.8" fill="#2a6fd2" stroke="#173f7a" stroke-width="0.7"/>
<ellipse cx="915.3" cy="488.9" rx="1.4" ry="1.8" fill="#2a6fd2" stroke="#173f7a" stroke-width="0.7"/>
<ellipse cx="900.3" cy="505.4" rx="1.4" ry="1.8" fill="#2a6fd2" stroke="#173f7a" stroke-width="0.7"/>
<ellipse cx="882.0" cy="514.1" rx="1.4" ry="1.8" fill="#2a6fd2" stroke="#173f7a" stroke-width="0.7"/>
<ellipse cx="863.2" cy="513.9" rx="1.4" ry="1.8" fill="#2a6fd2" stroke="#173f7a" stroke-width="0.7"/>
<ellipse cx="846.9" cy="504.7" rx="1.4" ry="1.8" fill="#2a6fd2" stroke="#173f7a" stroke-width="0.7"/>
<ellipse cx="835.4" cy="488.0" rx="1.4" ry="1.8" fill="#2a6fd2" stroke="#173f7a" stroke-width="0.7"/>
<ellipse cx="830.6" cy="466.2" rx="1.4" ry="1.8" fill="#2a6fd2" stroke="#173f7a" stroke-width="0.7"/>
<ellipse cx="833.1" cy="442.7" rx="1.4" ry="1.8" fill="#2a6fd2" stroke="#173f7a" stroke-width="0.7"/>
<ellipse cx="842.7" cy="421.1" rx="1.4" ry="1.8" fill="#2a6fd2" stroke="#173f7a" stroke-width="0.7"/>
<ellipse cx="857.7" cy="404.6" rx="1.4" ry="1.8" fill="#2a6fd2" stroke="#173f7a" stroke-width="0.7"/>
<ellipse cx="876.0" cy="395.9" rx="1.4" ry="1.8" fill="#2a6fd2" stroke="#173f7a" stroke-width="0.7"/>
<ellipse cx="894.8" cy="396.1" rx="1.4" ry="1.8" fill="#2a6fd2" stroke="#173f7a" stroke-width="0.7"/>
<ellipse cx="911.1" cy="405.3" rx="1.4" ry="1.8" fill="#2a6fd2" stroke="#173f7a" stroke-width="0.7"/>
<ellipse cx="922.6" cy="422.0" rx="1.4" ry="1.8" fill="#2a6fd2" stroke="#173f7a" stroke-width="0.7"/>
<ellipse cx="927.4" cy="443.8" rx="1.4" ry="1.8" fill="#2a6fd2" stroke="#173f7a" stroke-width="0.7"/>
<ellipse cx="884.0" cy="458.0" rx="42.0" ry="56.0" transform="rotate(15 884.0 458.0)" fill="#2d74d8" stroke="#16407a" stroke-width="0.7" />
<ellipse cx="886.0" cy="459.0" rx="39.0" ry="53.0" transform="rotate(15 886.0 459.0)" fill="url(#gBodyU)" stroke="#1c4d8f" stroke-width="0.6" />
<path d="M899.7 407.8L943.4 435.6L918.6 528.4L872.3 510.2Z" fill="url(#gBodyU)" stroke="none" stroke-width="0.6"/>
<ellipse cx="931.0" cy="482.0" rx="34.0" ry="48.0" transform="rotate(15 931.0 482.0)" fill="#2b70d4" stroke="#16407a" stroke-width="0.8" />
<ellipse cx="959.0" cy="489.5" rx="1.2" ry="1.6" fill="none" stroke="#173f7a" stroke-width="0.6"/>
<ellipse cx="949.8" cy="508.8" rx="1.2" ry="1.6" fill="none" stroke="#173f7a" stroke-width="0.6"/>
<ellipse cx="935.6" cy="520.9" rx="1.2" ry="1.6" fill="none" stroke="#173f7a" stroke-width="0.6"/>
<ellipse cx="920.1" cy="522.6" rx="1.2" ry="1.6" fill="none" stroke="#173f7a" stroke-width="0.6"/>
<ellipse cx="907.6" cy="513.4" rx="1.2" ry="1.6" fill="none" stroke="#173f7a" stroke-width="0.6"/>
<ellipse cx="901.3" cy="495.8" rx="1.2" ry="1.6" fill="none" stroke="#173f7a" stroke-width="0.6"/>
<ellipse cx="903.0" cy="474.5" rx="1.2" ry="1.6" fill="none" stroke="#173f7a" stroke-width="0.6"/>
<ellipse cx="912.2" cy="455.2" rx="1.2" ry="1.6" fill="none" stroke="#173f7a" stroke-width="0.6"/>
<ellipse cx="926.4" cy="443.1" rx="1.2" ry="1.6" fill="none" stroke="#173f7a" stroke-width="0.6"/>
<ellipse cx="941.9" cy="441.4" rx="1.2" ry="1.6" fill="none" stroke="#173f7a" stroke-width="0.6"/>
<ellipse cx="954.4" cy="450.6" rx="1.2" ry="1.6" fill="none" stroke="#173f7a" stroke-width="0.6"/>
<ellipse cx="960.7" cy="468.2" rx="1.2" ry="1.6" fill="none" stroke="#173f7a" stroke-width="0.6"/>
<ellipse cx="928.0" cy="485.0" rx="20.0" ry="35.0" transform="rotate(12 928.0 485.0)" fill="#0f2c5c" stroke="none" stroke-width="0.8" />
<path d="M914.0 458 L936.0 466" stroke="#5a7aa8" stroke-width="0.5"/>
<path d="M915.5 465 L937.5 473" stroke="#5a7aa8" stroke-width="0.5"/>
<path d="M917.0 472 L939.0 480" stroke="#5a7aa8" stroke-width="0.5"/>
<path d="M918.5 479 L940.5 487" stroke="#5a7aa8" stroke-width="0.5"/>
<path d="M920.0 486 L942.0 494" stroke="#5a7aa8" stroke-width="0.5"/>
<path d="M921.5 493 L943.5 501" stroke="#5a7aa8" stroke-width="0.5"/>
<path d="M923.0 500 L945.0 508" stroke="#5a7aa8" stroke-width="0.5"/>
<path d="M924.5 507 L946.5 515" stroke="#5a7aa8" stroke-width="0.5"/>
<path d="M1050.6 523.7 L1050.0 526.0 L1049.3 528.4 L1048.5 530.7 L1047.7 533.0 L1046.8 535.3 L1041.9 535.6 L1037.7 535.9 L1035.0 536.7 L1034.0 538.6 L1034.8 541.6 L1036.8 545.7 L1039.4 550.6 L1038.1 552.6 L1036.8 554.6 L1035.5 556.6 L1034.1 558.6 L1032.7 560.5 L1028.2 558.8 L1024.3 557.5 L1021.5 557.3 L1020.2 558.7 L1020.0 561.9 L1020.8 566.7 L1021.8 572.5 L1020.1 574.1 L1018.4 575.5 L1016.6 577.0 L1014.8 578.3 L1013.0 579.6 L1009.4 576.2 L1006.2 573.4 L1003.7 572.1 L1002.1 573.0 L1001.1 576.1 L1000.4 581.1 L999.8 587.2 L997.8 588.0 L995.9 588.8 L993.9 589.5 L991.9 590.1 L989.9 590.7 L987.5 585.9 L985.3 581.9 L983.4 579.7 L981.7 579.9 L979.9 582.6 L978.0 587.2 L975.8 592.9 L973.8 593.0 L971.7 592.9 L969.7 592.9 L967.7 592.7 L965.8 592.5 L964.8 586.9 L964.0 582.0 L962.9 579.2 L961.3 578.7 L958.9 580.6 L955.9 584.4 L952.3 589.1 L950.4 588.4 L948.6 587.6 L946.8 586.7 L945.0 585.8 L943.3 584.8 L944.0 578.9 L944.5 573.9 L944.3 570.6 L942.9 569.5 L940.3 570.5 L936.5 573.0 L931.9 576.2 L930.5 574.8 L929.0 573.3 L927.6 571.7 L926.2 570.1 L924.9 568.5 L927.1 563.0 L929.0 558.2 L929.7 554.9 L928.7 553.3 L926.1 553.2 L921.9 554.2 L916.9 555.6 L915.9 553.6 L915.0 551.6 L914.2 549.5 L913.4 547.4 L912.6 545.2 L916.1 540.7 L919.1 536.8 L920.6 533.9 L920.2 531.9 L917.8 530.8 L913.8 530.1 L908.8 529.5 L908.5 527.2 L908.2 524.8 L908.0 522.4 L907.8 520.1 L907.7 517.7 L912.2 514.6 L916.0 512.0 L918.1 509.7 L918.3 507.6 L916.4 505.5 L912.9 503.3 L908.5 500.7 L908.9 498.3 L909.3 495.9 L909.7 493.5 L910.2 491.1 L910.8 488.7 L915.6 487.5 L919.8 486.4 L922.4 485.0 L923.1 483.0 L922.0 480.2 L919.4 476.6 L916.1 472.4 L917.1 470.2 L918.1 468.0 L919.2 465.8 L920.3 463.7 L921.4 461.5 L926.2 462.2 L930.3 462.8 L933.1 462.4 L934.3 460.7 L934.0 457.6 L932.6 453.1 L930.7 447.7 L932.2 445.9 L933.7 444.1 L935.3 442.4 L936.9 440.7 L938.5 439.1 L942.7 441.6 L946.3 443.8 L948.9 444.5 L950.5 443.3 L951.0 440.1 L951.0 435.1 L950.8 429.1 L952.6 427.9 L954.5 426.8 L956.4 425.7 L958.3 424.7 L960.3 423.7 L963.4 427.9 L966.1 431.4 L968.2 433.1 L970.0 432.6 L971.4 429.6 L972.7 424.8 L974.1 418.8 L976.1 418.3 L978.2 417.9 L980.2 417.6 L982.2 417.4 L984.2 417.2 L985.9 422.5 L987.4 427.0 L988.9 429.5 L990.7 429.7 L992.7 427.3 L995.3 423.1 L998.2 417.8 L1000.2 418.1 L1002.1 418.6 L1004.0 419.0 L1005.9 419.6 L1007.8 420.2 L1007.9 426.0 L1008.1 431.0 L1008.8 434.1 L1010.3 434.9 L1012.8 433.5 L1016.3 430.3 L1020.4 426.2 L1022.1 427.4 L1023.8 428.5 L1025.4 429.7 L1027.0 431.0 L1028.5 432.4 L1027.1 438.1 L1025.8 443.1 L1025.6 446.4 L1026.8 447.8 L1029.5 447.3 L1033.5 445.6 L1038.4 443.2 L1039.6 445.0 L1040.8 446.8 L1041.9 448.6 L1043.0 450.5 L1044.1 452.4 L1041.2 457.5 L1038.7 461.9 L1037.6 465.0 L1038.3 466.9 L1040.9 467.5 L1045.0 467.3 L1050.1 466.9 L1050.8 469.1 L1051.3 471.3 L1051.9 473.6 L1052.4 475.9 L1052.8 478.2 L1048.8 482.0 L1045.3 485.3 L1043.5 488.0 L1043.6 490.0 L1045.8 491.7 L1049.6 493.1 L1054.3 494.7 L1054.3 497.1 L1054.3 499.6 L1054.2 502.0 L1054.0 504.4 L1053.8 506.8 L1049.0 509.0 L1045.0 510.9 L1042.6 512.8 L1042.1 514.9 L1043.7 517.3 L1046.8 520.2Z" fill="#8e8e8e" stroke="#333" stroke-width="0.8"/>
<path d="M1057.6 527.7 L1057.0 530.0 L1056.3 532.4 L1055.5 534.7 L1054.7 537.0 L1053.8 539.3 L1048.9 539.6 L1044.7 539.9 L1042.0 540.7 L1041.0 542.6 L1041.8 545.6 L1043.8 549.7 L1046.4 554.6 L1045.1 556.6 L1043.8 558.6 L1042.5 560.6 L1041.1 562.6 L1039.7 564.5 L1035.2 562.8 L1031.3 561.5 L1028.5 561.3 L1027.2 562.7 L1027.0 565.9 L1027.8 570.7 L1028.8 576.5 L1027.1 578.1 L1025.4 579.5 L1023.6 581.0 L1021.8 582.3 L1020.0 583.6 L1016.4 580.2 L1013.2 577.4 L1010.7 576.1 L1009.1 577.0 L1008.1 580.1 L1007.4 585.1 L1006.8 591.2 L1004.8 592.0 L1002.9 592.8 L1000.9 593.5 L998.9 594.1 L996.9 594.7 L994.5 589.9 L992.3 585.9 L990.4 583.7 L988.7 583.9 L986.9 586.6 L985.0 591.2 L982.8 596.9 L980.8 597.0 L978.7 596.9 L976.7 596.9 L974.7 596.7 L972.8 596.5 L971.8 590.9 L971.0 586.0 L969.9 583.2 L968.3 582.7 L965.9 584.6 L962.9 588.4 L959.3 593.1 L957.4 592.4 L955.6 591.6 L953.8 590.7 L952.0 589.8 L950.3 588.8 L951.0 582.9 L951.5 577.9 L951.3 574.6 L949.9 573.5 L947.3 574.5 L943.5 577.0 L938.9 580.2 L937.5 578.8 L936.0 577.3 L934.6 575.7 L933.2 574.1 L931.9 572.5 L934.1 567.0 L936.0 562.2 L936.7 558.9 L935.7 557.3 L933.1 557.2 L928.9 558.2 L923.9 559.6 L922.9 557.6 L922.0 555.6 L921.2 553.5 L920.4 551.4 L919.6 549.2 L923.1 544.7 L926.1 540.8 L927.6 537.9 L927.2 535.9 L924.8 534.8 L920.8 534.1 L915.8 533.5 L915.5 531.2 L915.2 528.8 L915.0 526.4 L914.8 524.1 L914.7 521.7 L919.2 518.6 L923.0 516.0 L925.1 513.7 L925.3 511.6 L923.4 509.5 L919.9 507.3 L915.5 504.7 L915.9 502.3 L916.3 499.9 L916.7 497.5 L917.2 495.1 L917.8 492.7 L922.6 491.5 L926.8 490.4 L929.4 489.0 L930.1 487.0 L929.0 484.2 L926.4 480.6 L923.1 476.4 L924.1 474.2 L925.1 472.0 L926.2 469.8 L927.3 467.7 L928.4 465.5 L933.2 466.2 L937.3 466.8 L940.1 466.4 L941.3 464.7 L941.0 461.6 L939.6 457.1 L937.7 451.7 L939.2 449.9 L940.7 448.1 L942.3 446.4 L943.9 444.7 L945.5 443.1 L949.7 445.6 L953.3 447.8 L955.9 448.5 L957.5 447.3 L958.0 444.1 L958.0 439.1 L957.8 433.1 L959.6 431.9 L961.5 430.8 L963.4 429.7 L965.3 428.7 L967.3 427.7 L970.4 431.9 L973.1 435.4 L975.2 437.1 L977.0 436.6 L978.4 433.6 L979.7 428.8 L981.1 422.8 L983.1 422.3 L985.2 421.9 L987.2 421.6 L989.2 421.4 L991.2 421.2 L992.9 426.5 L994.4 431.0 L995.9 433.5 L997.7 433.7 L999.7 431.3 L1002.3 427.1 L1005.2 421.8 L1007.2 422.1 L1009.1 422.6 L1011.0 423.0 L1012.9 423.6 L1014.8 424.2 L1014.9 430.0 L1015.1 435.0 L1015.8 438.1 L1017.3 438.9 L1019.8 437.5 L1023.3 434.3 L1027.4 430.2 L1029.1 431.4 L1030.8 432.5 L1032.4 433.7 L1034.0 435.0 L1035.5 436.4 L1034.1 442.1 L1032.8 447.1 L1032.6 450.4 L1033.8 451.8 L1036.5 451.3 L1040.5 449.6 L1045.4 447.2 L1046.6 449.0 L1047.8 450.8 L1048.9 452.6 L1050.0 454.5 L1051.1 456.4 L1048.2 461.5 L1045.7 465.9 L1044.6 469.0 L1045.3 470.9 L1047.9 471.5 L1052.0 471.3 L1057.1 470.9 L1057.8 473.1 L1058.3 475.3 L1058.9 477.6 L1059.4 479.9 L1059.8 482.2 L1055.8 486.0 L1052.3 489.3 L1050.5 492.0 L1050.6 494.0 L1052.8 495.7 L1056.6 497.1 L1061.3 498.7 L1061.3 501.1 L1061.3 503.6 L1061.2 506.0 L1061.0 508.4 L1060.8 510.8 L1056.0 513.0 L1052.0 514.9 L1049.6 516.8 L1049.1 518.9 L1050.7 521.3 L1053.8 524.2Z" fill="#d2d2d2" stroke="#333" stroke-width="0.9"/>
<ellipse cx="988.0" cy="509.0" rx="61.0" ry="76.0" transform="rotate(15 988.0 509.0)" fill="#a6a6a6" stroke="#444" stroke-width="0.6" />
<ellipse cx="987.0" cy="507.0" rx="50.0" ry="66.0" transform="rotate(15 987.0 507.0)" fill="#808080" stroke="#333" stroke-width="0.7" />
<ellipse cx="986.0" cy="506.0" rx="44.5" ry="60.0" transform="rotate(15 986.0 506.0)" fill="#ffffff" stroke="#333" stroke-width="0.8" />
<ellipse cx="978.0" cy="501.0" rx="32.0" ry="45.0" transform="rotate(15 978.0 501.0)" fill="#2a2a2a" stroke="#111" stroke-width="0.6" />
<ellipse cx="989.0" cy="500.0" rx="17.0" ry="27.0" transform="rotate(15 989.0 500.0)" fill="#ffffff" stroke="none" stroke-width="0.8" />
<ellipse cx="966.0" cy="496.0" rx="17.0" ry="26.0" transform="rotate(15 966.0 496.0)" fill="#3a3a3a" stroke="none" stroke-width="0.8" />
<circle cx="1004.1" cy="508.0" r="1.1" fill="#ddd"/>
<circle cx="995.4" cy="526.4" r="1.1" fill="#ddd"/>
<circle cx="982.1" cy="538.0" r="1.1" fill="#ddd"/>
<circle cx="967.6" cy="539.6" r="1.1" fill="#ddd"/>
<circle cx="956.0" cy="531.0" r="1.1" fill="#ddd"/>
<circle cx="950.2" cy="514.3" r="1.1" fill="#ddd"/>
<circle cx="951.9" cy="494.0" r="1.1" fill="#ddd"/>
<circle cx="960.6" cy="475.6" r="1.1" fill="#ddd"/>
<circle cx="973.9" cy="464.0" r="1.1" fill="#ddd"/>
<circle cx="988.4" cy="462.4" r="1.1" fill="#ddd"/>
<circle cx="1000.0" cy="471.0" r="1.1" fill="#ddd"/>
<circle cx="1005.8" cy="487.7" r="1.1" fill="#ddd"/>
<line x1="992.0" y1="464.0" x2="1003.4" y2="469.3" stroke="#4e4e4e" stroke-width="4.2" stroke-linecap="round"/><line x1="992.0" y1="464.0" x2="1003.4" y2="469.3" stroke="#ececec" stroke-width="2.5" stroke-linecap="round"/><circle cx="992.0" cy="464.0" r="1.5" fill="#555"/><ellipse cx="1003.4" cy="469.3" rx="3.0" ry="3.5" fill="#9c9c9c" stroke="#3a3a3a" stroke-width="0.8"/>
<line x1="977.0" y1="476.0" x2="988.4" y2="481.3" stroke="#4e4e4e" stroke-width="4.2" stroke-linecap="round"/><line x1="977.0" y1="476.0" x2="988.4" y2="481.3" stroke="#ececec" stroke-width="2.5" stroke-linecap="round"/><circle cx="977.0" cy="476.0" r="1.5" fill="#555"/><ellipse cx="988.4" cy="481.3" rx="3.0" ry="3.5" fill="#9c9c9c" stroke="#3a3a3a" stroke-width="0.8"/>
<line x1="969.0" y1="497.0" x2="980.4" y2="502.3" stroke="#4e4e4e" stroke-width="4.2" stroke-linecap="round"/><line x1="969.0" y1="497.0" x2="980.4" y2="502.3" stroke="#ececec" stroke-width="2.5" stroke-linecap="round"/><circle cx="969.0" cy="497.0" r="1.5" fill="#555"/><ellipse cx="980.4" cy="502.3" rx="3.0" ry="3.5" fill="#9c9c9c" stroke="#3a3a3a" stroke-width="0.8"/>
<line x1="965.0" y1="516.0" x2="976.4" y2="521.3" stroke="#4e4e4e" stroke-width="4.2" stroke-linecap="round"/><line x1="965.0" y1="516.0" x2="976.4" y2="521.3" stroke="#ececec" stroke-width="2.5" stroke-linecap="round"/><circle cx="965.0" cy="516.0" r="1.5" fill="#555"/><ellipse cx="976.4" cy="521.3" rx="3.0" ry="3.5" fill="#9c9c9c" stroke="#3a3a3a" stroke-width="0.8"/>
<line x1="966.0" y1="534.0" x2="977.4" y2="539.3" stroke="#4e4e4e" stroke-width="4.2" stroke-linecap="round"/><line x1="966.0" y1="534.0" x2="977.4" y2="539.3" stroke="#ececec" stroke-width="2.5" stroke-linecap="round"/><circle cx="966.0" cy="534.0" r="1.5" fill="#555"/><ellipse cx="977.4" cy="539.3" rx="3.0" ry="3.5" fill="#9c9c9c" stroke="#3a3a3a" stroke-width="0.8"/>
<line x1="1005.0" y1="446.0" x2="1016.4" y2="451.3" stroke="#4e4e4e" stroke-width="4.2" stroke-linecap="round"/><line x1="1005.0" y1="446.0" x2="1016.4" y2="451.3" stroke="#ececec" stroke-width="2.5" stroke-linecap="round"/><circle cx="1005.0" cy="446.0" r="1.5" fill="#555"/><ellipse cx="1016.4" cy="451.3" rx="3.0" ry="3.5" fill="#9c9c9c" stroke="#3a3a3a" stroke-width="0.8"/>
<line x1="1027.0" y1="459.0" x2="1038.4" y2="464.3" stroke="#4e4e4e" stroke-width="4.2" stroke-linecap="round"/><line x1="1027.0" y1="459.0" x2="1038.4" y2="464.3" stroke="#ececec" stroke-width="2.5" stroke-linecap="round"/><circle cx="1027.0" cy="459.0" r="1.5" fill="#555"/><ellipse cx="1038.4" cy="464.3" rx="3.0" ry="3.5" fill="#9c9c9c" stroke="#3a3a3a" stroke-width="0.8"/>
<line x1="1045.0" y1="472.0" x2="1056.4" y2="477.3" stroke="#4e4e4e" stroke-width="4.2" stroke-linecap="round"/><line x1="1045.0" y1="472.0" x2="1056.4" y2="477.3" stroke="#ececec" stroke-width="2.5" stroke-linecap="round"/><circle cx="1045.0" cy="472.0" r="1.5" fill="#555"/><ellipse cx="1056.4" cy="477.3" rx="3.0" ry="3.5" fill="#9c9c9c" stroke="#3a3a3a" stroke-width="0.8"/>
<line x1="983.0" y1="560.0" x2="994.4" y2="565.3" stroke="#4e4e4e" stroke-width="4.2" stroke-linecap="round"/><line x1="983.0" y1="560.0" x2="994.4" y2="565.3" stroke="#ececec" stroke-width="2.5" stroke-linecap="round"/><circle cx="983.0" cy="560.0" r="1.5" fill="#555"/><ellipse cx="994.4" cy="565.3" rx="3.0" ry="3.5" fill="#9c9c9c" stroke="#3a3a3a" stroke-width="0.8"/>
<line x1="999.0" y1="568.0" x2="1010.4" y2="573.3" stroke="#4e4e4e" stroke-width="4.2" stroke-linecap="round"/><line x1="999.0" y1="568.0" x2="1010.4" y2="573.3" stroke="#ececec" stroke-width="2.5" stroke-linecap="round"/><circle cx="999.0" cy="568.0" r="1.5" fill="#555"/><ellipse cx="1010.4" cy="573.3" rx="3.0" ry="3.5" fill="#9c9c9c" stroke="#3a3a3a" stroke-width="0.8"/>
<line x1="1017.0" y1="574.0" x2="1028.4" y2="579.3" stroke="#4e4e4e" stroke-width="4.2" stroke-linecap="round"/><line x1="1017.0" y1="574.0" x2="1028.4" y2="579.3" stroke="#ececec" stroke-width="2.5" stroke-linecap="round"/><circle cx="1017.0" cy="574.0" r="1.5" fill="#555"/><ellipse cx="1028.4" cy="579.3" rx="3.0" ry="3.5" fill="#9c9c9c" stroke="#3a3a3a" stroke-width="0.8"/>
<ellipse cx="1037.5" cy="532.0" rx="35.0" ry="51.0" transform="rotate(28 1037.5 532.0)" fill="#3a86ea" stroke="#173f7a" stroke-width="0.8" />
<path d="M1061.4 487.0L1065.4 489.0L1017.6 579.0L1013.6 577.0Z" fill="#3a86ea" stroke="none" stroke-width="0.6"/>
<ellipse cx="1041.5" cy="534.0" rx="35.0" ry="51.0" transform="rotate(28 1041.5 534.0)" fill="#2a6ed0" stroke="#173f7a" stroke-width="0.9" />
<ellipse cx="1067.1" cy="547.6" rx="3.2" ry="3.6" fill="#2260bb" stroke="#173f7a" stroke-width="0.8"/>
<ellipse cx="1055.7" cy="562.9" rx="3.2" ry="3.6" fill="#2260bb" stroke="#173f7a" stroke-width="0.8"/>
<ellipse cx="1041.5" cy="572.5" rx="3.2" ry="3.6" fill="#2260bb" stroke="#173f7a" stroke-width="0.8"/>
<ellipse cx="1027.3" cy="574.5" rx="3.2" ry="3.6" fill="#2260bb" stroke="#173f7a" stroke-width="0.8"/>
<ellipse cx="1015.9" cy="568.4" rx="3.2" ry="3.6" fill="#2260bb" stroke="#173f7a" stroke-width="0.8"/>
<ellipse cx="1009.6" cy="555.5" rx="3.2" ry="3.6" fill="#2260bb" stroke="#173f7a" stroke-width="0.8"/>
<ellipse cx="1009.6" cy="538.4" rx="3.2" ry="3.6" fill="#2260bb" stroke="#173f7a" stroke-width="0.8"/>
<ellipse cx="1015.9" cy="520.4" rx="3.2" ry="3.6" fill="#2260bb" stroke="#173f7a" stroke-width="0.8"/>
<ellipse cx="1027.3" cy="505.1" rx="3.2" ry="3.6" fill="#2260bb" stroke="#173f7a" stroke-width="0.8"/>
<ellipse cx="1041.5" cy="495.5" rx="3.2" ry="3.6" fill="#2260bb" stroke="#173f7a" stroke-width="0.8"/>
<ellipse cx="1055.7" cy="493.5" rx="3.2" ry="3.6" fill="#2260bb" stroke="#173f7a" stroke-width="0.8"/>
<ellipse cx="1067.1" cy="499.6" rx="3.2" ry="3.6" fill="#2260bb" stroke="#173f7a" stroke-width="0.8"/>
<ellipse cx="1073.4" cy="512.5" rx="3.2" ry="3.6" fill="#2260bb" stroke="#173f7a" stroke-width="0.8"/>
<ellipse cx="1073.4" cy="529.6" rx="3.2" ry="3.6" fill="#2260bb" stroke="#173f7a" stroke-width="0.8"/>
<line x1="1024.0" y1="523.0" x2="1034.2" y2="527.1" stroke="#4e4e4e" stroke-width="4.0" stroke-linecap="round"/><line x1="1024.0" y1="523.0" x2="1034.2" y2="527.1" stroke="#ececec" stroke-width="2.4" stroke-linecap="round"/><circle cx="1024.0" cy="523.0" r="1.4" fill="#555"/><ellipse cx="1034.2" cy="527.1" rx="2.9" ry="3.3" fill="#9c9c9c" stroke="#3a3a3a" stroke-width="0.8"/>
<line x1="1022.0" y1="541.0" x2="1032.2" y2="545.1" stroke="#4e4e4e" stroke-width="4.0" stroke-linecap="round"/><line x1="1022.0" y1="541.0" x2="1032.2" y2="545.1" stroke="#ececec" stroke-width="2.4" stroke-linecap="round"/><circle cx="1022.0" cy="541.0" r="1.4" fill="#555"/><ellipse cx="1032.2" cy="545.1" rx="2.9" ry="3.3" fill="#9c9c9c" stroke="#3a3a3a" stroke-width="0.8"/>
<line x1="1016.0" y1="558.0" x2="1026.2" y2="562.1" stroke="#4e4e4e" stroke-width="4.0" stroke-linecap="round"/><line x1="1016.0" y1="558.0" x2="1026.2" y2="562.1" stroke="#ececec" stroke-width="2.4" stroke-linecap="round"/><circle cx="1016.0" cy="558.0" r="1.4" fill="#555"/><ellipse cx="1026.2" cy="562.1" rx="2.9" ry="3.3" fill="#9c9c9c" stroke="#3a3a3a" stroke-width="0.8"/>
<line x1="1012.0" y1="574.0" x2="1022.2" y2="578.1" stroke="#4e4e4e" stroke-width="4.0" stroke-linecap="round"/><line x1="1012.0" y1="574.0" x2="1022.2" y2="578.1" stroke="#ececec" stroke-width="2.4" stroke-linecap="round"/><circle cx="1012.0" cy="574.0" r="1.4" fill="#555"/><ellipse cx="1022.2" cy="578.1" rx="2.9" ry="3.3" fill="#9c9c9c" stroke="#3a3a3a" stroke-width="0.8"/>
<line x1="1032.0" y1="506.0" x2="1042.2" y2="510.1" stroke="#4e4e4e" stroke-width="4.0" stroke-linecap="round"/><line x1="1032.0" y1="506.0" x2="1042.2" y2="510.1" stroke="#ececec" stroke-width="2.4" stroke-linecap="round"/><circle cx="1032.0" cy="506.0" r="1.4" fill="#555"/><ellipse cx="1042.2" cy="510.1" rx="2.9" ry="3.3" fill="#9c9c9c" stroke="#3a3a3a" stroke-width="0.8"/>
<line x1="1075.0" y1="506.0" x2="1083.9" y2="509.2" stroke="#4e4e4e" stroke-width="3.8" stroke-linecap="round"/><line x1="1075.0" y1="506.0" x2="1083.9" y2="509.2" stroke="#ececec" stroke-width="2.3" stroke-linecap="round"/><circle cx="1075.0" cy="506.0" r="1.3" fill="#555"/><ellipse cx="1083.9" cy="509.2" rx="2.8" ry="3.1" fill="#9c9c9c" stroke="#3a3a3a" stroke-width="0.8"/>
<line x1="1088.0" y1="510.0" x2="1096.9" y2="513.2" stroke="#4e4e4e" stroke-width="3.8" stroke-linecap="round"/><line x1="1088.0" y1="510.0" x2="1096.9" y2="513.2" stroke="#ececec" stroke-width="2.3" stroke-linecap="round"/><circle cx="1088.0" cy="510.0" r="1.3" fill="#555"/><ellipse cx="1096.9" cy="513.2" rx="2.8" ry="3.1" fill="#9c9c9c" stroke="#3a3a3a" stroke-width="0.8"/>
<line x1="1096.0" y1="520.0" x2="1104.9" y2="523.2" stroke="#4e4e4e" stroke-width="3.8" stroke-linecap="round"/><line x1="1096.0" y1="520.0" x2="1104.9" y2="523.2" stroke="#ececec" stroke-width="2.3" stroke-linecap="round"/><circle cx="1096.0" cy="520.0" r="1.3" fill="#555"/><ellipse cx="1104.9" cy="523.2" rx="2.8" ry="3.1" fill="#9c9c9c" stroke="#3a3a3a" stroke-width="0.8"/>
<line x1="1100.0" y1="536.0" x2="1108.9" y2="539.2" stroke="#4e4e4e" stroke-width="3.8" stroke-linecap="round"/><line x1="1100.0" y1="536.0" x2="1108.9" y2="539.2" stroke="#ececec" stroke-width="2.3" stroke-linecap="round"/><circle cx="1100.0" cy="536.0" r="1.3" fill="#555"/><ellipse cx="1108.9" cy="539.2" rx="2.8" ry="3.1" fill="#9c9c9c" stroke="#3a3a3a" stroke-width="0.8"/>
<line x1="1099.0" y1="554.0" x2="1107.9" y2="557.2" stroke="#4e4e4e" stroke-width="3.8" stroke-linecap="round"/><line x1="1099.0" y1="554.0" x2="1107.9" y2="557.2" stroke="#ececec" stroke-width="2.3" stroke-linecap="round"/><circle cx="1099.0" cy="554.0" r="1.3" fill="#555"/><ellipse cx="1107.9" cy="557.2" rx="2.8" ry="3.1" fill="#9c9c9c" stroke="#3a3a3a" stroke-width="0.8"/>
<line x1="1091.0" y1="571.0" x2="1099.9" y2="574.2" stroke="#4e4e4e" stroke-width="3.8" stroke-linecap="round"/><line x1="1091.0" y1="571.0" x2="1099.9" y2="574.2" stroke="#ececec" stroke-width="2.3" stroke-linecap="round"/><circle cx="1091.0" cy="571.0" r="1.3" fill="#555"/><ellipse cx="1099.9" cy="574.2" rx="2.8" ry="3.1" fill="#9c9c9c" stroke="#3a3a3a" stroke-width="0.8"/>
<line x1="1078.0" y1="584.0" x2="1086.9" y2="587.2" stroke="#4e4e4e" stroke-width="3.8" stroke-linecap="round"/><line x1="1078.0" y1="584.0" x2="1086.9" y2="587.2" stroke="#ececec" stroke-width="2.3" stroke-linecap="round"/><circle cx="1078.0" cy="584.0" r="1.3" fill="#555"/><ellipse cx="1086.9" cy="587.2" rx="2.8" ry="3.1" fill="#9c9c9c" stroke="#3a3a3a" stroke-width="0.8"/>
<line x1="1062.0" y1="588.0" x2="1070.9" y2="591.2" stroke="#4e4e4e" stroke-width="3.8" stroke-linecap="round"/><line x1="1062.0" y1="588.0" x2="1070.9" y2="591.2" stroke="#ececec" stroke-width="2.3" stroke-linecap="round"/><circle cx="1062.0" cy="588.0" r="1.3" fill="#555"/><ellipse cx="1070.9" cy="591.2" rx="2.8" ry="3.1" fill="#9c9c9c" stroke="#3a3a3a" stroke-width="0.8"/>
<line x1="1048.0" y1="586.0" x2="1056.9" y2="589.2" stroke="#4e4e4e" stroke-width="3.8" stroke-linecap="round"/><line x1="1048.0" y1="586.0" x2="1056.9" y2="589.2" stroke="#ececec" stroke-width="2.3" stroke-linecap="round"/><circle cx="1048.0" cy="586.0" r="1.3" fill="#555"/><ellipse cx="1056.9" cy="589.2" rx="2.8" ry="3.1" fill="#9c9c9c" stroke="#3a3a3a" stroke-width="0.8"/>
<line x1="1040.0" y1="578.0" x2="1048.9" y2="581.2" stroke="#4e4e4e" stroke-width="3.8" stroke-linecap="round"/><line x1="1040.0" y1="578.0" x2="1048.9" y2="581.2" stroke="#ececec" stroke-width="2.3" stroke-linecap="round"/><circle cx="1040.0" cy="578.0" r="1.3" fill="#555"/><ellipse cx="1048.9" cy="581.2" rx="2.8" ry="3.1" fill="#9c9c9c" stroke="#3a3a3a" stroke-width="0.8"/>
<line x1="1055.0" y1="594.0" x2="1063.9" y2="597.2" stroke="#4e4e4e" stroke-width="3.8" stroke-linecap="round"/><line x1="1055.0" y1="594.0" x2="1063.9" y2="597.2" stroke="#ececec" stroke-width="2.3" stroke-linecap="round"/><circle cx="1055.0" cy="594.0" r="1.3" fill="#555"/><ellipse cx="1063.9" cy="597.2" rx="2.8" ry="3.1" fill="#9c9c9c" stroke="#3a3a3a" stroke-width="0.8"/>
<line x1="1072.0" y1="596.0" x2="1080.9" y2="599.2" stroke="#4e4e4e" stroke-width="3.8" stroke-linecap="round"/><line x1="1072.0" y1="596.0" x2="1080.9" y2="599.2" stroke="#ececec" stroke-width="2.3" stroke-linecap="round"/><circle cx="1072.0" cy="596.0" r="1.3" fill="#555"/><ellipse cx="1080.9" cy="599.2" rx="2.8" ry="3.1" fill="#9c9c9c" stroke="#3a3a3a" stroke-width="0.8"/>
</g>
</svg>
<svg class="abs" style="left:1260px;top:500px" width="5" height="14"><path d="M4 3.5 L1 7 L4 10.5Z" fill="#4e4340"/></svg>

<!-- SPLITTER HANDLE -->
<svg class="abs" style="left:730px;top:612px" width="52" height="6"><path d="M4 4.5 L7 1.5 L10 4.5Z" fill="#4a3e3a"/><rect x="19" y="1.5" width="14" height="3" rx="1.2" fill="#4a3e3a"/><path d="M42 1.5 L48 1.5 L45 4.5Z" fill="#4a3e3a"/></svg>

<!-- TABLE HEADER -->
<div class="thc" style="left:255.5px;top:623px">No.</div>
<div class="thc" style="left:325px;top:623px">Qty.</div>
<div class="thc" style="left:395.5px;top:623px">Partnumber</div>
<div class="thc" style="left:582px;top:623px">Description</div>
<div class="thc" style="left:888px;top:623px">Remark</div>
<div class="thc" style="left:1076px;top:623px">TI</div>

<div id="tb2" class="abs" style="left:250px;top:642px;width:1010px;height:247px;overflow:hidden">
<div style="position:absolute;left:0;top:-642px;width:1010px;height:1000px">
<div class="tr" style="top:638px;height:24px;background:#fff"><div class="td" style="left:5.5px">28</div><div class="td" style="left:75px">16</div><div class="td" style="left:143.5px">9ADA312-7</div><div class="td" style="left:330px">Plain washer</div><div class="td" style="left:632.5px">8.4x16x1.6</div></div>
<div class="tr" style="top:662px;height:24px;background:#f7f7f7"><div class="td" style="left:5.5px">29</div><div class="td" style="left:75px">1</div><div class="td" style="left:143.5px">3HAB3772-84</div><div class="td" style="left:330px">O-ring</div></div>
<div class="tr" style="top:686px;height:24px;background:#fff"><div class="td" style="left:5.5px">30</div><div class="td" style="left:75px">1</div><div class="td" style="left:143.5px">3HAC021030-001</div><div class="td" style="left:330px">Motor Inc. Pinion</div><div class="td" style="left:818px"><u>238472018</u></div></div>
<div class="tr" style="top:710px;height:24px;background:#f7f7f7"><div class="td" style="left:5.5px">31</div><div class="td" style="left:75px">4</div><div class="td" style="left:143.5px">3HAB3409-50</div><div class="td" style="left:330px">Hex socket head cap screw</div><div class="td" style="left:632.5px">M10x40 quality Gleitmo 610</div><div class="td" style="left:818px"><u>238472018</u></div></div>
<div class="tr" style="top:734px;height:24px;background:#fff"><div class="td" style="left:5.5px">32</div><div class="td" style="left:75px">4</div><div class="td" style="left:143.5px">3HAB4233-1</div><div class="td" style="left:330px">Washer</div><div class="td" style="left:818px"><u>238472018</u></div></div>
<div class="tr" style="top:758px;height:24px;background:#f7f7f7"><div class="td" style="left:5.5px">33</div><div class="td" style="left:75px">6</div><div class="td" style="left:143.5px">3HAB3409-86</div><div class="td" style="left:330px">Hex socket head cap screw</div><div class="td" style="left:632.5px">M16x60 quality 12.9 Gleitmo 610</div></div>
<div class="tr" style="top:782px;height:24px;background:#fff"><div class="td" style="left:5.5px">34</div><div class="td" style="left:75px">6 pcs</div><div class="td" style="left:143.5px">3HAA1001-186</div><div class="td" style="left:330px">Washer</div><div class="td" style="left:632.5px">17x25x3</div></div>
<div class="tr" style="top:806px;height:24px;background:#f7f7f7"><div class="td" style="left:5.5px">35</div><div class="td" style="left:75px">21</div><div class="td" style="left:143.5px">3HAB3409-69</div><div class="td" style="left:330px">Hex socket head cap screw</div><div class="td" style="left:632.5px">M12x50 quality 12.9 Gleitmo 610</div></div>
<div class="tr" style="top:830px;height:39px;background:#fff"><div class="td" style="left:5.5px">35</div><div class="td" style="left:75px">21</div><div class="td" style="left:143.5px">3HAB7700-69</div><div class="td" style="left:330px">Hex socket head cap screw</div><div class="td" style="left:632.5px">M12x50 quality UNBRAKO 12.9<br>Gleitmo 610</div></div>
<div class="tr" style="top:869px;height:24px;background:#f7f7f7"><div class="td" style="left:5.5px">36</div><div class="td" style="left:75px">21</div><div class="td" style="left:143.5px">3HAA1001-134</div><div class="td" style="left:330px">Washer</div><div class="td" style="left:632.5px">13x19x1.5</div></div>
</div></div>
<div id="tthumb"></div>
</body></html>
